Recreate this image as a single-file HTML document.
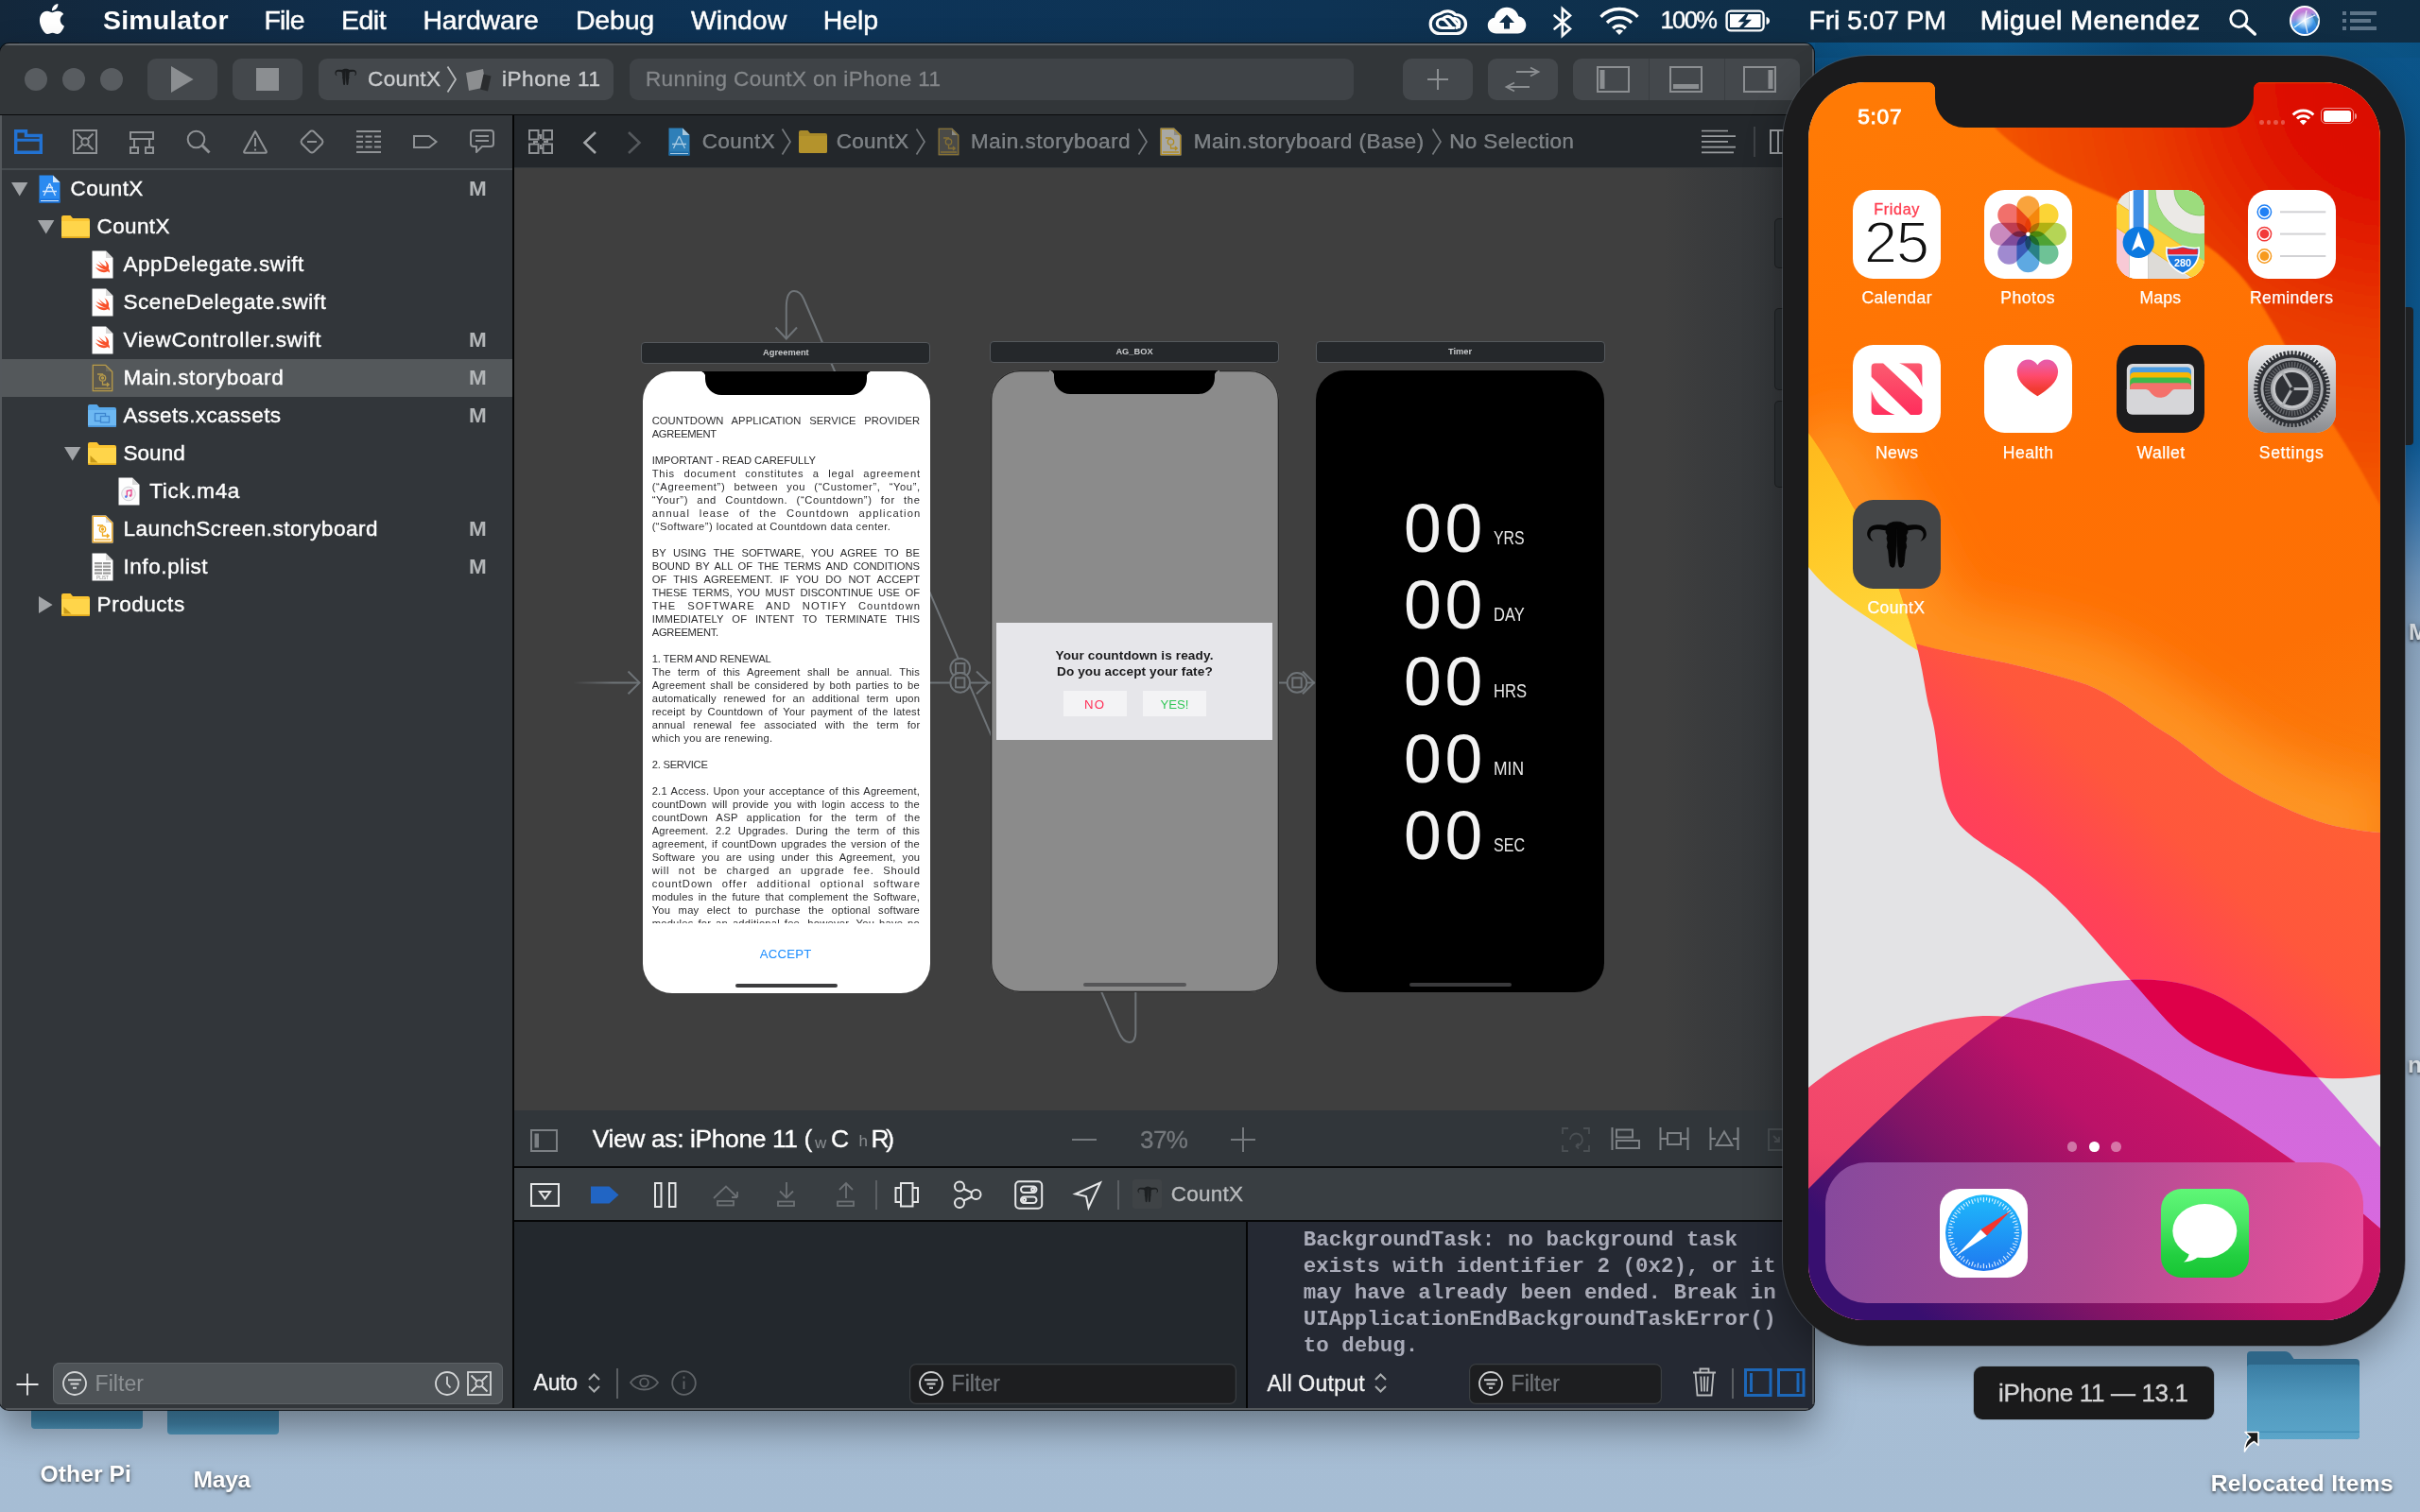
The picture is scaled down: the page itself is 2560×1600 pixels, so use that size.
<!DOCTYPE html>
<html><head><meta charset="utf-8"><title>Xcode</title>
<style>
*{box-sizing:border-box;margin:0;padding:0}
html,body{width:2560px;height:1600px;overflow:hidden}
body{position:relative;font-family:"Liberation Sans",sans-serif;background:#a9bfd5;color:#fff}
.a{position:absolute}
.t{position:absolute;white-space:nowrap;line-height:1}
svg{position:absolute;overflow:visible}
</style></head><body><div id="root" style="position:absolute;left:0;top:0;width:2560px;height:1600px;overflow:hidden;will-change:transform">
<!-- desktop -->
<div class="a" style="left:0;top:0;width:2560px;height:1600px;background:linear-gradient(180deg,#0b5387 0px,#0c588f 250px,#0f5e9b 470px,#3a7ab3 540px,#6f99c2 610px,#92adc9 680px,#a2b9d1 820px,#a8bed5 1300px,#a6bdd4 1600px)"></div>
<div class="a" style="left:1920px;top:45px;width:640px;height:16px;background:linear-gradient(90deg,#0b4f7f,#0e5a90 30%,#0a4b7a 55%,#0d5688 80%,#0a5283)"></div>
<div class="a" style="left:0;top:40px;width:20px;height:20px;background:#11273a"></div>
<div class="a" style="left:33px;top:1440px;width:118px;height:72.3px;border-radius:0 0 4px 4px;background:linear-gradient(180deg,#3f82a7,#3f84aa 85%,#4d93b8)"></div>
<div class="a" style="left:177px;top:1440px;width:118px;height:78.4px;border-radius:0 0 4px 4px;background:linear-gradient(180deg,#4284a9,#4386ac 85%,#4f95ba)"></div>
<div class="t" style="left:42.6px;top:1547.8px;font-size:24.6px;color:#fff;letter-spacing:0.07px;font-weight:bold;text-shadow:0 1.5px 3px rgba(0,0,0,.55),0 0 6px rgba(0,0,0,.25);">Other Pi</div>
<div class="t" style="left:204.6px;top:1553.6px;font-size:24.6px;color:#fff;letter-spacing:-0.28px;font-weight:bold;text-shadow:0 1.5px 3px rgba(0,0,0,.55),0 0 6px rgba(0,0,0,.25);">Maya</div>
<div class="t" style="left:2548.0px;top:656.6px;font-size:24.6px;color:#e8eef4;font-weight:bold;text-shadow:0 1.5px 3px rgba(0,0,0,.55),0 0 6px rgba(0,0,0,.25);">M</div>
<div class="t" style="left:2547.0px;top:1114.6px;font-size:24.6px;color:#e8eef4;font-weight:bold;text-shadow:0 1.5px 3px rgba(0,0,0,.55),0 0 6px rgba(0,0,0,.25);">nt</div>
<!-- menubar -->
<div class="a" id="mb" style="left:0;top:0;width:2560px;height:45px;background:linear-gradient(90deg,#13273b 0,#0f2e4c 400px,#0d3458 900px,#0e3354 1400px,#0f2e47 1900px,#102c42 2560px)"></div>
<svg style="left:39px;top:3.5px" width="32" height="32" viewBox="0 0 24 24"><path fill="#fff" d="M12.152 6.896c-.948 0-2.415-1.078-3.96-1.04-2.04.027-3.91 1.183-4.961 3.014-2.117 3.675-.546 9.103 1.519 12.09 1.013 1.454 2.208 3.09 3.792 3.039 1.52-.065 2.09-.987 3.935-.987 1.831 0 2.35.987 3.96.948 1.637-.026 2.676-1.48 3.676-2.948 1.156-1.688 1.636-3.325 1.662-3.415-.039-.013-3.182-1.221-3.22-4.857-.026-3.04 2.48-4.494 2.597-4.559-1.429-2.09-3.623-2.324-4.39-2.376-2-.156-3.675 1.09-4.61 1.09zM15.53 3.83c.843-1.012 1.4-2.427 1.245-3.83-1.207.052-2.662.805-3.532 1.818-.78.896-1.454 2.338-1.273 3.714 1.338.104 2.715-.688 3.559-1.701"/></svg>
<div class="t" style="left:109.0px;top:7.4px;font-size:28.5px;color:#fff;letter-spacing:0.13px;font-weight:bold;">Simulator</div>
<div class="t" style="left:279.6px;top:7.4px;font-size:28.5px;color:#fff;letter-spacing:-1.01px;-webkit-text-stroke:0.45px;">File</div>
<div class="t" style="left:361.0px;top:7.4px;font-size:28.5px;color:#fff;letter-spacing:-0.50px;-webkit-text-stroke:0.45px;">Edit</div>
<div class="t" style="left:447.4px;top:7.4px;font-size:28.5px;color:#fff;letter-spacing:-0.14px;-webkit-text-stroke:0.45px;">Hardware</div>
<div class="t" style="left:608.9px;top:7.4px;font-size:28.5px;color:#fff;letter-spacing:-0.17px;-webkit-text-stroke:0.45px;">Debug</div>
<div class="t" style="left:731.0px;top:7.4px;font-size:28.5px;color:#fff;letter-spacing:-0.03px;-webkit-text-stroke:0.45px;">Window</div>
<div class="t" style="left:870.7px;top:7.4px;font-size:28.5px;color:#fff;letter-spacing:-0.10px;-webkit-text-stroke:0.45px;">Help</div>
<div class="t" style="left:1756.5px;top:8.5px;font-size:25.5px;color:#fff;letter-spacing:-1.57px;-webkit-text-stroke:0.40px;">100%</div>
<div class="t" style="left:1913.5px;top:7.4px;font-size:28.5px;color:#fff;letter-spacing:-0.18px;-webkit-text-stroke:0.45px;">Fri 5:07 PM</div>
<div class="t" style="left:2094.8px;top:7.4px;font-size:28.5px;color:#fff;letter-spacing:0.52px;-webkit-text-stroke:0.80px;">Miguel Menendez</div>
<svg style="left:1511px;top:9px" width="42" height="29" viewBox="0 0 42 29"><g fill="none" stroke="#fff" stroke-width="3.2" stroke-linecap="round">
<path d="M13 5.2 C18 1.5 25 2.2 28.5 6.5 C34.5 6.5 39.5 10.5 39.5 16.5 C39.5 22.5 35 26.5 29.5 26.5 L12 26.5 C6.5 26.5 2.2 22.5 2.2 16.5 C2.2 10 7.5 6.2 13 5.2 Z"/>
<path d="M27 20.5 L14.5 20.5 C11.5 20.5 9.3 18.5 9.3 15.8 C9.3 13 11.6 11 14.3 11 C16 11 17 11.6 18.3 13 L24.5 20"/>
<path d="M15.2 11.2 C17 8.2 21.5 7.3 24.3 10 L32.5 19.5"/>
<path d="M26 11 C28 10 32.8 11.3 32.8 15.8 C32.8 18 31.6 19.6 30 20.3"/>
</g></svg>
<svg style="left:1573px;top:7px" width="42" height="29" viewBox="0 0 42 29"><path fill="#fff" d="M10 28.5 C4.5 28.5 0.8 24.8 0.8 20 C0.8 15.5 4 12.3 8 11.8 C9 5.5 14.5 0.8 21 0.8 C27 0.8 32 4.8 33.3 10.3 C38 11 41.3 14.8 41.3 19.5 C41.3 24.5 37.5 28.5 32.5 28.5 Z"/><path fill="#12304b" d="M21 8.5 L29 17 L24 17 L24 23.5 L18 23.5 L18 17 L13 17 Z"/></svg>
<svg style="left:1642px;top:7px" width="22" height="33" viewBox="0 0 22 33"><path fill="none" stroke="#fff" stroke-width="2.6" stroke-linejoin="miter" stroke-linecap="round" d="M2.5 9.5 L19 23.5 L10.8 30.8 L10.8 2.2 L19 9.5 L2.5 23.5"/></svg>
<svg style="left:1691px;top:6px" width="44" height="32" viewBox="0 0 44 32"><g fill="none" stroke="#fff" stroke-width="3.4" stroke-linecap="butt">
<path d="M2.5 11.8 C13 0.8 31 0.8 41.5 11.8"/><path d="M9 18 C16 10.8 28 10.8 35 18"/><path d="M15.2 24 C19 20.2 25 20.2 28.8 24"/></g><path fill="#fff" d="M22 31 L18 26.8 C20.2 24.8 23.8 24.8 26 26.8 Z"/></svg>
<svg style="left:1825px;top:10px" width="48" height="24" viewBox="0 0 48 24"><rect x="1.6" y="1.6" width="39" height="20.8" rx="4.5" fill="none" stroke="#fff" stroke-width="2.4"/><path fill="#fff" d="M43.5 8 C45.8 8.4 47 10 47 12 C47 14 45.8 15.6 43.5 16 Z"/>
<path fill="#fff" d="M5 5 L21.5 5 L13.5 13.2 L20 13.2 L15 19 L5 19 Z M24.5 5 L37.5 5 L37.5 19 L19.5 19 L28 10.8 L21.5 10.8 Z"/></svg>
<svg style="left:2357px;top:9px" width="31" height="29" viewBox="0 0 31 29"><circle cx="11.3" cy="11" r="8.6" fill="none" stroke="#fff" stroke-width="2.8"/><path d="M17.5 17.3 L28.3 27" stroke="#fff" stroke-width="3.4" stroke-linecap="round"/></svg>
<svg style="left:2421px;top:5px" width="34" height="34" viewBox="0 0 34 34"><defs><linearGradient id="sg" x1="0.3" y1="0" x2="0.6" y2="1"><stop offset="0" stop-color="#e06fd8"/><stop offset=".35" stop-color="#a78bd8"/><stop offset=".55" stop-color="#4aa5ee"/><stop offset="1" stop-color="#1f6fd0"/></linearGradient><radialGradient id="sg2" cx=".5" cy=".5" r=".35"><stop offset="0" stop-color="#fff"/><stop offset="1" stop-color="#fff" stop-opacity="0"/></radialGradient></defs><circle cx="17" cy="17" r="15" fill="url(#sg)" stroke="#fff" stroke-width="2"/><path d="M24 9 L32 15 L30 23 Z" fill="#2d6f9d" opacity=".7"/><circle cx="17" cy="17" r="14" fill="url(#sg2)"/><path d="M6 24 L17 16 L28 11 M17 16 L20 30 M17 16 L19 6" stroke="#fff" stroke-width="1.2" opacity=".85" fill="none"/></svg>
<div class="a" style="left:2478px;top:11.8px;width:4.3px;height:4.2px;background:#5d7488"></div>
<div class="a" style="left:2486px;top:11.8px;width:28px;height:4.2px;background:#5d7488"></div>
<div class="a" style="left:2478px;top:19.8px;width:4.3px;height:4.2px;background:#5d7488"></div>
<div class="a" style="left:2486px;top:19.8px;width:22px;height:4.2px;background:#5d7488"></div>
<div class="a" style="left:2478px;top:27.8px;width:4.3px;height:4.2px;background:#5d7488"></div>
<div class="a" style="left:2486px;top:27.8px;width:28px;height:4.2px;background:#5d7488"></div>
<!-- xcode window -->
<div class="a" id="xc" style="left:0;top:46px;width:1919px;height:1446px;border-radius:10px 10px 9px 9px;background:#32363a;overflow:hidden;box-shadow:0 0 0 1px rgba(10,12,14,.85),0 18px 40px rgba(0,0,0,.38)">
<div class="a" style="left:0;top:-46px;width:1919px;height:1600px">
<div class="a" style="left:0;top:46px;width:1919px;height:75px;background:#323639"></div>
<div class="a" style="left:0;top:46px;width:1919px;height:2px;background:#60656a"></div>
<div class="a" style="left:0;top:120.5px;width:1919px;height:2px;background:#0a0b0c"></div>
<div class="a" style="left:26px;top:72px;width:24px;height:24px;border-radius:12px;background:#585c60"></div>
<div class="a" style="left:66px;top:72px;width:24px;height:24px;border-radius:12px;background:#585c60"></div>
<div class="a" style="left:106px;top:72px;width:24px;height:24px;border-radius:12px;background:#585c60"></div>
<div class="a" style="left:156px;top:62px;width:74px;height:44px;background:#44484c;border-radius:9px;"></div>
<svg style="left:181px;top:70px" width="24" height="28"><path d="M0 0 L23.6 14 L0 28 Z" fill="#8b8e91"/></svg>
<div class="a" style="left:246px;top:62px;width:74px;height:44px;background:#44484c;border-radius:9px;"></div>
<div class="a" style="left:270.7px;top:72px;width:24.3px;height:24px;background:#8b8e91"></div>
<div class="a" style="left:337px;top:62px;width:312px;height:44px;background:#44484c;border-radius:9px;"></div>
<svg style="left:353.5px;top:72px" width="23.5" height="19" viewBox="14 22 65 51"><g fill="#1a1c1e"><path d="M37.5 27 C30 26 24 26 21.5 27 C17 28.5 14.7 33 15.3 37.5 C15.8 40.5 18.5 42.8 21.8 44 C19 41 18 38.5 18.6 35.5 C19.3 32.6 22 31.3 25 31.3 C29 31.3 33 32 37 32.8 Z"/><path d="M55.5 27 C63 26 69 26 71.5 27 C76 28.5 78.3 33 77.7 37.5 C77.2 40.5 74.5 42.8 71.2 44 C74 41 75 38.5 74.4 35.5 C73.7 32.6 71 31.3 68 31.3 C64 31.3 60 32 56 32.8 Z"/><path d="M46.5 23.2 L50.0 23.4 L54.0 24.8 L57.2 27.0 L57.6 31.0 L58.0 34.2 L56.3 37.5 L57.0 41.0 L55.9 45.0 L56.7 49.5 L55.3 54.0 L54.8 60.0 L54.2 66.0 L53.2 70.0 L51.2 71.3 L49.2 70.8 L48.2 66.0 L47.5 58.0 L47.0 48.0 L46.7 30.0 L46.3 30.0 L46.0 48.0 L45.5 58.0 L44.8 66.0 L43.8 70.8 L41.8 71.3 L39.8 70.0 L38.8 66.0 L38.2 60.0 L37.7 54.0 L36.3 49.5 L37.1 45.0 L36.0 41.0 L36.7 37.5 L35.0 34.2 L35.4 31.0 L35.8 27.0 L39.0 24.8 L43.0 23.4 L46.5 23.2 Z"/></g></svg>
<div class="t" style="left:389.0px;top:72.8px;font-size:22.5px;color:#c9cbcd;letter-spacing:0.39px;-webkit-text-stroke:0.40px;">CountX</div>
<svg style="left:472px;top:70px" width="12" height="28"><path d="M1.5 0.5 L10 14 L1.5 27.5" fill="none" stroke="#b5b8ba" stroke-width="1.8"/></svg>
<svg style="left:492px;top:72px" width="29" height="25" viewBox="0 0 29 25"><path d="M1 5 L19 1 L22 20 L4 24 Z" fill="#8c8e90"/><path d="M19.5 6.5 L27.5 8.5 L24 24.5 L16 22.5 Z" fill="#2a2c2e"/></svg>
<div class="t" style="left:531.0px;top:72.8px;font-size:22.5px;color:#c9cbcd;letter-spacing:0.54px;-webkit-text-stroke:0.40px;">iPhone 11</div>
<div class="a" style="left:666px;top:62px;width:766px;height:44px;background:#3f4347;border-radius:9px"></div>
<div class="t" style="left:683.0px;top:73.1px;font-size:22.5px;color:#84878a;letter-spacing:0.37px;-webkit-text-stroke:0.30px;">Running CountX on iPhone 11</div>
<div class="a" style="left:1484px;top:62px;width:74px;height:44px;background:#44484c;border-radius:9px;"></div>
<svg style="left:1509px;top:72px" width="24" height="24"><path d="M12 1 V23 M1 12 H23" stroke="#8b8e91" stroke-width="2" fill="none"/></svg>
<div class="a" style="left:1574px;top:62px;width:74px;height:44px;background:#44484c;border-radius:9px;"></div>
<svg style="left:1592px;top:71px" width="38" height="28"><path d="M12 5 H35 M27 0.5 L35.5 5 L27 9.5 M26 21 H2 M10 16.5 L1.5 21 L10 25.5" stroke="#8b8e91" stroke-width="1.8" fill="none"/></svg>
<div class="a" style="left:1664px;top:62px;width:240px;height:44px;background:#44484c;border-radius:9px;"></div>
<div class="a" style="left:1743.5px;top:62px;width:1px;height:44px;background:#3a3e42"></div><div class="a" style="left:1823.5px;top:62px;width:1px;height:44px;background:#3a3e42"></div>
<svg style="left:1688.5px;top:70px" width="35" height="28"><rect x="1" y="1" width="33" height="26" fill="none" stroke="#8b8e91" stroke-width="2"/><rect x="3.5" y="4" width="5" height="20" fill="#8b8e91"/></svg>
<svg style="left:1766.0px;top:70px" width="35" height="28"><rect x="1" y="1" width="33" height="26" fill="none" stroke="#8b8e91" stroke-width="2"/><rect x="4" y="19" width="27" height="5" fill="#8b8e91"/></svg>
<svg style="left:1844.0px;top:70px" width="35" height="28"><rect x="1" y="1" width="33" height="26" fill="none" stroke="#8b8e91" stroke-width="2"/><rect x="26.5" y="4" width="5" height="20" fill="#8b8e91"/></svg>
<div class="a" style="left:0;top:122px;width:542px;height:1370px;background:#32363a"></div>
<div class="a" style="left:0;top:178px;width:542px;height:1.5px;background:#464b4f"></div>
<div class="a" style="left:0;top:122px;width:1.5px;height:1370px;background:#4d5256"></div>
<div class="a" style="left:542px;top:122px;width:2px;height:1370px;background:#040505"></div>
<svg style="left:15px;top:137px" width="30" height="26" viewBox="0 0 30 26"><g fill="none" stroke="#2272d2" stroke-width="3.4"><path d="M1.7 3 V24.3 H28.3 V6.5 H12.5 V1.7 H1.7 Z"/><path d="M1.7 11.3 H28.3" stroke-width="3"/></g></svg>
<svg style="left:77px;top:137px" width="26" height="26" viewBox="0 0 26 26"><g fill="none" stroke="#8f9295" stroke-width="2"><rect x="1" y="1" width="24" height="24"/><circle cx="13" cy="13" r="3.7"/><path d="M4.5 4.5 L10 10 M21.5 4.5 L16 10 M4.5 21.5 L10 16 M21.5 21.5 L16 16"/></g></svg>
<svg style="left:137px;top:137px" width="26" height="26" viewBox="0 0 26 26"><g fill="none" stroke="#8f9295" stroke-width="2"><rect x="1" y="3" width="24" height="7"/><rect x="1" y="19" width="8" height="6"/><rect x="17" y="19" width="8" height="6"/><path d="M5 10 V19 M21 10 V19"/></g></svg>
<svg style="left:197px;top:137px" width="26" height="26" viewBox="0 0 26 26"><g fill="none" stroke="#8f9295" stroke-width="2"><circle cx="10.5" cy="10.5" r="8.8"/><path d="M17 17 L24.5 24.5" stroke-width="3"/></g></svg>
<svg style="left:257px;top:137px" width="26" height="26" viewBox="0 0 26 26"><g fill="none" stroke="#8f9295" stroke-width="2"><path d="M13 2 L24.8 23.3 Q25.2 24.6 23.8 24.8 L2.2 24.8 Q0.8 24.6 1.2 23.3 Z" stroke-linejoin="round"/><path d="M13 9 V18 M13 20.5 V22.5"/></g></svg>
<svg style="left:317px;top:137px" width="26" height="26" viewBox="0 0 26 26"><g fill="none" stroke="#8f9295" stroke-width="2"><path d="M13 1.5 Q14 1.2 15 2.2 L23.8 11 Q25.2 13 23.8 15 L15 23.8 Q13 25.2 11 23.8 L2.2 15 Q0.8 13 2.2 11 L11 2.2 Q12 1.2 13 1.5 Z"/><path d="M8 13 H18"/></g></svg>
<svg style="left:377px;top:137px" width="26" height="26" viewBox="0 0 26 26"><g fill="none" stroke="#8f9295" stroke-width="2"><path d="M0 2 H26 M0 24 H26" /><path d="M0 7.5 H7 M9.5 7.5 H16.5 M19 7.5 H26 M0 13 H7 M9.5 13 H16.5 M19 13 H26 M0 18.5 H7 M9.5 18.5 H16.5 M19 18.5 H26"/></g></svg>
<svg style="left:437px;top:137px" width="26" height="26" viewBox="0 0 26 26"><g fill="none" stroke="#8f9295" stroke-width="2"><path d="M1 7 H17 L24.5 13 L17 19 H1 Z"/></g></svg>
<svg style="left:497px;top:137px" width="26" height="26" viewBox="0 0 26 26"><g fill="none" stroke="#8f9295" stroke-width="2"><path d="M4 1 H22 Q25 1 25 4 V15 Q25 18 22 18 H13 L7 24 V18 H4 Q1 18 1 15 V4 Q1 1 4 1 Z" stroke-linejoin="round"/><path d="M6 7 H20 M6 12 H20"/></g></svg>
<div class="a" style="left:0;top:380px;width:542px;height:40px;background:#54585b"></div>
<svg style="left:12.0px;top:192.7px" width="18" height="15"><path d="M0 0 H17.4 L8.7 14.6 Z" fill="#a1a4a7"/></svg>
<svg style="left:41.0px;top:184.5px" width="23" height="30" viewBox="0 0 23 30"><path d="M0.5 0.5 H15 L22.5 8 V29.5 H0.5 Z" fill="#2b8af0"/><path d="M15 0.5 L22.5 8 H15 Z" fill="#cfe5fb"/><path d="M0.5 25.5 H22.5 V29.5 H0.5 Z" fill="#1973dd"/><path d="M2 27.5 H21" stroke="#d9ecff" stroke-width="1"/><g fill="none" stroke="#d4e8ff" stroke-width="1.3"><path d="M11.5 9 L5.5 22 M11.5 9 L17.5 22 M4 17.5 H19 M8 13.5 L15 13.5"/></g></svg>
<div class="t" style="left:74.6px;top:188.6px;font-size:22.5px;color:#fff;letter-spacing:0.33px;-webkit-text-stroke:0.40px;">CountX</div>
<div class="t" style="left:496.0px;top:188.6px;font-size:22.5px;color:#b3b6b8;font-weight:bold;">M</div>
<svg style="left:39.7px;top:232.7px" width="18" height="15"><path d="M0 0 H17.4 L8.7 14.6 Z" fill="#a1a4a7"/></svg>
<svg style="left:65.0px;top:228.0px" width="30" height="24" viewBox="0 0 30 24"><path d="M0 2 Q0 0 2 0 H9.5 L12 3 H28 Q30 3 30 5 V22 Q30 24 28 24 H2 Q0 24 0 22 Z" fill="#fbc532"/><path d="M0 6 H30 V22 Q30 24 28 24 H2 Q0 24 0 22 Z" fill="#ffd54a"/><path d="M0 22.3 H30 V22.5 Q30 24 28 24 H2 Q0 24 0 22.5 Z" fill="#e0a81c"/></svg>
<div class="t" style="left:102.6px;top:228.6px;font-size:22.5px;color:#fff;letter-spacing:0.35px;-webkit-text-stroke:0.40px;">CountX</div>
<svg style="left:96.6px;top:265.0px" width="23" height="30" viewBox="0 0 23 30"><path d="M0.5 0.5 H15 L22.5 8 V29.5 H0.5 Z" fill="#fefefe"/><path d="M15 0.5 L22.5 8 H15 Z" fill="#d8d8d8"/><path d="M4.5 14 C8 18 12 20.5 15.5 20.5 C12 20.5 7 20 4 17.5 C6.5 22 12 24.5 16 22.5 C17.5 21.8 18.5 23 19 23.8 C19.2 22 18.6 20.5 17.8 19.3 C19 16 17 12.5 13.5 10.5 C15.5 13 16 15.5 15.3 17.3 C12 15.5 8.5 12.5 7 10.5 C8.5 13 10 15 12 17 C9.5 16 6.5 15 4.5 14 Z" fill="#f8512a"/></svg>
<div class="t" style="left:130.4px;top:268.6px;font-size:22.5px;color:#fff;letter-spacing:0.60px;-webkit-text-stroke:0.40px;">AppDelegate.swift</div>
<svg style="left:96.6px;top:305.0px" width="23" height="30" viewBox="0 0 23 30"><path d="M0.5 0.5 H15 L22.5 8 V29.5 H0.5 Z" fill="#fefefe"/><path d="M15 0.5 L22.5 8 H15 Z" fill="#d8d8d8"/><path d="M4.5 14 C8 18 12 20.5 15.5 20.5 C12 20.5 7 20 4 17.5 C6.5 22 12 24.5 16 22.5 C17.5 21.8 18.5 23 19 23.8 C19.2 22 18.6 20.5 17.8 19.3 C19 16 17 12.5 13.5 10.5 C15.5 13 16 15.5 15.3 17.3 C12 15.5 8.5 12.5 7 10.5 C8.5 13 10 15 12 17 C9.5 16 6.5 15 4.5 14 Z" fill="#f8512a"/></svg>
<div class="t" style="left:130.4px;top:308.6px;font-size:22.5px;color:#fff;letter-spacing:0.51px;-webkit-text-stroke:0.40px;">SceneDelegate.swift</div>
<svg style="left:96.6px;top:345.0px" width="23" height="30" viewBox="0 0 23 30"><path d="M0.5 0.5 H15 L22.5 8 V29.5 H0.5 Z" fill="#fefefe"/><path d="M15 0.5 L22.5 8 H15 Z" fill="#d8d8d8"/><path d="M4.5 14 C8 18 12 20.5 15.5 20.5 C12 20.5 7 20 4 17.5 C6.5 22 12 24.5 16 22.5 C17.5 21.8 18.5 23 19 23.8 C19.2 22 18.6 20.5 17.8 19.3 C19 16 17 12.5 13.5 10.5 C15.5 13 16 15.5 15.3 17.3 C12 15.5 8.5 12.5 7 10.5 C8.5 13 10 15 12 17 C9.5 16 6.5 15 4.5 14 Z" fill="#f8512a"/></svg>
<div class="t" style="left:130.4px;top:348.6px;font-size:22.5px;color:#fff;letter-spacing:0.69px;-webkit-text-stroke:0.40px;">ViewController.swift</div>
<div class="t" style="left:496.0px;top:348.6px;font-size:22.5px;color:#b3b6b8;font-weight:bold;">M</div>
<svg style="left:96.6px;top:385.0px" width="23" height="30" viewBox="0 0 23 30"><path d="M0.5 0.5 H15 L22.5 8 V29.5 H0.5 Z" fill="#5a5850"/><path d="M15 0.5 L22.5 8 H15 Z" fill="#6b695f"/><g fill="none" stroke="#b79a4a" stroke-width="1.3"><path d="M1.3 1.3 H14.5 L21.7 8.5 V28.7 H1.3 Z"/><path d="M3 26 H20"/><circle cx="11.5" cy="15" r="3.2"/><circle cx="11.5" cy="15" r="1" fill="#b79a4a"/><path d="M6 11 H11.5 V12 M11.5 18.5 V22 H18 M16 20 L18.2 22 L16 24"/></g></svg>
<div class="t" style="left:130.4px;top:388.6px;font-size:22.5px;color:#fff;letter-spacing:0.57px;-webkit-text-stroke:0.40px;">Main.storyboard</div>
<div class="t" style="left:496.0px;top:388.6px;font-size:22.5px;color:#b3b6b8;font-weight:bold;">M</div>
<svg style="left:93.0px;top:428.0px" width="30" height="24" viewBox="0 0 30 24"><path d="M0 2 Q0 0 2 0 H9.5 L12 3 H28 Q30 3 30 5 V22 Q30 24 28 24 H2 Q0 24 0 22 Z" fill="#58a8ea"/><path d="M0 6 H30 V22 Q30 24 28 24 H2 Q0 24 0 22 Z" fill="#6db8f2"/><path d="M0 22.3 H30 V22.5 Q30 24 28 24 H2 Q0 24 0 22.5 Z" fill="#4a95d8"/><g fill="none" stroke="#3d86cf" stroke-width="1.3"><rect x="7.5" y="9.5" width="11" height="8"/><rect x="13.5" y="12.5" width="9" height="6.5" fill="#6db8f2"/></g></svg>
<div class="t" style="left:130.4px;top:428.6px;font-size:22.5px;color:#fff;letter-spacing:0.38px;-webkit-text-stroke:0.40px;">Assets.xcassets</div>
<div class="t" style="left:496.0px;top:428.6px;font-size:22.5px;color:#b3b6b8;font-weight:bold;">M</div>
<svg style="left:67.5px;top:472.7px" width="18" height="15"><path d="M0 0 H17.4 L8.7 14.6 Z" fill="#a1a4a7"/></svg>
<svg style="left:93.0px;top:468.0px" width="30" height="24" viewBox="0 0 30 24"><path d="M0 2 Q0 0 2 0 H9.5 L12 3 H28 Q30 3 30 5 V22 Q30 24 28 24 H2 Q0 24 0 22 Z" fill="#fbc532"/><path d="M0 6 H30 V22 Q30 24 28 24 H2 Q0 24 0 22 Z" fill="#ffd54a"/><path d="M0 22.3 H30 V22.5 Q30 24 28 24 H2 Q0 24 0 22.5 Z" fill="#e0a81c"/><path d="M2.5 14 L10.5 21.5 H2.5 Z" fill="#c89a18"/></svg>
<div class="t" style="left:130.4px;top:468.6px;font-size:22.5px;color:#fff;letter-spacing:0.08px;-webkit-text-stroke:0.40px;">Sound</div>
<svg style="left:124.9px;top:505.0px" width="23" height="30" viewBox="0 0 23 30"><path d="M0.5 0.5 H15 L22.5 8 V29.5 H0.5 Z" fill="#fefefe"/><path d="M15 0.5 L22.5 8 H15 Z" fill="#d8d8d8"/><circle cx="11" cy="17.5" r="7.3" fill="#f4f4f6" stroke="#d2d2d6" stroke-width="1"/><path d="M9.3 20.5 V14.5 L14 13.5 V19.3" fill="none" stroke="#e8468c" stroke-width="1.3"/><circle cx="8.3" cy="20.6" r="1.3" fill="#4a7df0"/><circle cx="13" cy="19.5" r="1.3" fill="#e8468c"/></svg>
<div class="t" style="left:158.2px;top:508.6px;font-size:22.5px;color:#fff;letter-spacing:0.68px;-webkit-text-stroke:0.40px;">Tick.m4a</div>
<svg style="left:96.6px;top:545.0px" width="23" height="30" viewBox="0 0 23 30"><path d="M0.5 0.5 H15 L22.5 8 V29.5 H0.5 Z" fill="#fefefe"/><path d="M15 0.5 L22.5 8 H15 Z" fill="#d8d8d8"/><g fill="none" stroke="#f0a81e" stroke-width="1.3"><path d="M1.3 1.3 H14.5 L21.7 8.5 V28.7 H1.3 Z"/><path d="M3 26 H20"/><circle cx="11.5" cy="15" r="3.2"/><circle cx="11.5" cy="15" r="1" fill="#f0a81e"/><path d="M6 11 H11.5 V12 M11.5 18.5 V22 H18 M16 20 L18.2 22 L16 24"/></g></svg>
<div class="t" style="left:130.4px;top:548.6px;font-size:22.5px;color:#fff;letter-spacing:0.52px;-webkit-text-stroke:0.40px;">LaunchScreen.storyboard</div>
<div class="t" style="left:496.0px;top:548.6px;font-size:22.5px;color:#b3b6b8;font-weight:bold;">M</div>
<svg style="left:96.6px;top:585.0px" width="23" height="30" viewBox="0 0 23 30"><path d="M0.5 0.5 H15 L22.5 8 V29.5 H0.5 Z" fill="#fefefe"/><path d="M15 0.5 L22.5 8 H15 Z" fill="#d8d8d8"/><g fill="#9a9a9a"><rect x="3" y="10" width="8" height="2.2"/><rect x="12" y="10" width="8" height="2.2"/><rect x="3" y="13.5" width="8" height="2.2"/><rect x="12" y="13.5" width="8" height="2.2"/><rect x="3" y="17" width="8" height="2.2"/><rect x="12" y="17" width="8" height="2.2"/><rect x="3" y="20.5" width="8" height="2.2"/><rect x="12" y="20.5" width="8" height="2.2"/></g><text x="11.5" y="28.3" font-size="4.6" text-anchor="middle" fill="#888" font-family="Liberation Sans">PLIST</text></svg>
<div class="t" style="left:130.4px;top:588.6px;font-size:22.5px;color:#fff;letter-spacing:0.60px;-webkit-text-stroke:0.40px;">Info.plist</div>
<div class="t" style="left:496.0px;top:588.6px;font-size:22.5px;color:#b3b6b8;font-weight:bold;">M</div>
<svg style="left:41.0px;top:631.0px" width="15" height="18"><path d="M0 0 V18 L14.6 9 Z" fill="#a1a4a7"/></svg>
<svg style="left:65.0px;top:628.0px" width="30" height="24" viewBox="0 0 30 24"><path d="M0 2 Q0 0 2 0 H9.5 L12 3 H28 Q30 3 30 5 V22 Q30 24 28 24 H2 Q0 24 0 22 Z" fill="#fbc532"/><path d="M0 6 H30 V22 Q30 24 28 24 H2 Q0 24 0 22 Z" fill="#ffd54a"/><path d="M0 22.3 H30 V22.5 Q30 24 28 24 H2 Q0 24 0 22.5 Z" fill="#e0a81c"/><path d="M2.5 14 L10.5 21.5 H2.5 Z" fill="#c89a18"/></svg>
<div class="t" style="left:102.6px;top:628.6px;font-size:22.5px;color:#fff;letter-spacing:0.54px;-webkit-text-stroke:0.40px;">Products</div>
<svg style="left:17px;top:1453px" width="24" height="24"><path d="M12 0.5 V23.5 M0.5 12 H23.5" stroke="#e8e9ea" stroke-width="1.8" fill="none"/></svg>
<div class="a" style="left:56px;top:1442px;width:476px;height:44px;background:#4e5357;border-radius:7px;box-shadow:inset 0 0 0 1px #5d6266"></div>
<svg style="left:66px;top:1451px" width="26" height="26"><circle cx="13" cy="13" r="12" fill="none" stroke="#d4d6d7" stroke-width="1.8"/><path d="M6 9.3 H20 M8.5 13.5 H17.5 M11 17.7 H15" stroke="#d4d6d7" stroke-width="2" fill="none"/></svg>
<div class="t" style="left:100.5px;top:1452.9px;font-size:23.0px;color:#8d9194;letter-spacing:0.08px;">Filter</div>
<svg style="left:460px;top:1451px" width="26" height="26"><circle cx="13" cy="13" r="12" fill="none" stroke="#d4d6d7" stroke-width="1.8"/><path d="M13 5.5 V13.5 L16.5 17.5" fill="none" stroke="#d4d6d7" stroke-width="1.8"/></svg>
<svg style="left:494px;top:1451px" width="26" height="26"><g fill="none" stroke="#d4d6d7" stroke-width="1.8"><rect x="1" y="1" width="24" height="24"/><circle cx="13" cy="13" r="3.7"/><path d="M4.5 4.5 L10 10 M21.5 4.5 L16 10 M4.5 21.5 L10 16 M21.5 21.5 L16 16"/></g></svg>
<div class="a" style="left:544px;top:122px;width:1376px;height:56px;background:#23272b"></div>
<div class="a" style="left:544px;top:177px;width:1376px;height:1px;background:#34383b"></div>
<svg style="left:559px;top:137px" width="26" height="26"><g fill="none" stroke="#8f9295" stroke-width="2"><rect x="1" y="1" width="9.5" height="9.5"/><rect x="15.5" y="1" width="9.5" height="9.5"/><rect x="1" y="15.5" width="9.5" height="9.5"/><rect x="15.5" y="15.5" width="9.5" height="9.5"/><path d="M10.5 6 H13 V10 M20 10.5 V13 H16 M6 15.5 V13 H10 M15.5 20 H13 V16"/></g></svg>
<svg style="left:616px;top:139px" width="16" height="24"><path d="M14 1 L2.5 12 L14 23" fill="none" stroke="#a4a7aa" stroke-width="2.6"/></svg>
<svg style="left:663px;top:139px" width="16" height="24"><path d="M2 1 L13.5 12 L2 23" fill="none" stroke="#55595d" stroke-width="2.6"/></svg>
<svg style="left:707px;top:135px" width="23" height="30" viewBox="0 0 23 30"><path d="M0.5 0.5 H15 L22.5 8 V29.5 H0.5 Z" fill="#2e7fb8"/><path d="M15 0.5 L22.5 8 H15 Z" fill="#a8c7dc"/><path d="M0.5 25.5 H22.5 V29.5 H0.5 Z" fill="#1d6ca8"/><path d="M2 27.5 H21" stroke="#a9cbe3" stroke-width="1"/><g fill="none" stroke="#a9cbe3" stroke-width="1.3"><path d="M11.5 9 L5.5 22 M11.5 9 L17.5 22 M4 17.5 H19"/></g></svg>
<div class="t" style="left:742.5px;top:138.9px;font-size:22.5px;color:#7c8084;letter-spacing:0.39px;text-shadow:0.4px 0 0 #7c8084;">CountX</div>
<svg style="left:826.0px;top:136px" width="12" height="28"><path d="M1.5 0.5 L10 14 L1.5 27.5" fill="none" stroke="#74787c" stroke-width="1.7"/></svg>
<svg style="left:845px;top:138px" width="30" height="24" viewBox="0 0 30 24"><path d="M0 2 Q0 0 2 0 H9.5 L12 3 H28 Q30 3 30 5 V22 Q30 24 28 24 H2 Q0 24 0 22 Z" fill="#a98a2a"/><path d="M0 6 H30 V22 Q30 24 28 24 H2 Q0 24 0 22 Z" fill="#b4932c"/></svg>
<div class="t" style="left:884.5px;top:138.9px;font-size:22.5px;color:#7c8084;letter-spacing:0.29px;text-shadow:0.4px 0 0 #7c8084;">CountX</div>
<svg style="left:968.0px;top:136px" width="12" height="28"><path d="M1.5 0.5 L10 14 L1.5 27.5" fill="none" stroke="#74787c" stroke-width="1.7"/></svg>
<svg style="left:991.5px;top:135px" width="23" height="30" viewBox="0 0 23 30"><path d="M0.5 0.5 H15 L22.5 8 V29.5 H0.5 Z" fill="#4a4a47"/><path d="M15 0.5 L22.5 8 H15 Z" fill="#8a8a86"/><g fill="none" stroke="#857034" stroke-width="1.3"><path d="M1.3 1.3 H14.5 L21.7 8.5 V28.7 H1.3 Z"/><path d="M3 26 H20"/><circle cx="11.5" cy="15" r="3.2"/><path d="M6 11 H11.5 V12 M11.5 18.5 V22 H18 M16 20 L18.2 22 L16 24"/></g></svg>
<div class="t" style="left:1026.7px;top:138.9px;font-size:22.5px;color:#7c8084;letter-spacing:0.53px;text-shadow:0.4px 0 0 #7c8084;">Main.storyboard</div>
<svg style="left:1203.0px;top:136px" width="12" height="28"><path d="M1.5 0.5 L10 14 L1.5 27.5" fill="none" stroke="#74787c" stroke-width="1.7"/></svg>
<svg style="left:1227.0px;top:135px" width="23" height="30" viewBox="0 0 23 30"><path d="M0.5 0.5 H15 L22.5 8 V29.5 H0.5 Z" fill="#a8a8a4"/><path d="M15 0.5 L22.5 8 H15 Z" fill="#8a8a86"/><g fill="none" stroke="#b08c24" stroke-width="1.3"><path d="M1.3 1.3 H14.5 L21.7 8.5 V28.7 H1.3 Z"/><path d="M3 26 H20"/><circle cx="11.5" cy="15" r="3.2"/><path d="M6 11 H11.5 V12 M11.5 18.5 V22 H18 M16 20 L18.2 22 L16 24"/></g></svg>
<div class="t" style="left:1262.6px;top:138.9px;font-size:22.5px;color:#7c8084;letter-spacing:0.45px;text-shadow:0.4px 0 0 #7c8084;">Main.storyboard (Base)</div>
<svg style="left:1513.5px;top:136px" width="12" height="28"><path d="M1.5 0.5 L10 14 L1.5 27.5" fill="none" stroke="#74787c" stroke-width="1.7"/></svg>
<div class="t" style="left:1533.0px;top:138.9px;font-size:22.5px;color:#7c8084;letter-spacing:0.37px;text-shadow:0.4px 0 0 #7c8084;">No Selection</div>
<svg style="left:1800px;top:137px" width="36" height="26"><path d="M0 1.5 H28 M0 7.2 H36 M0 12.9 H28 M0 18.6 H36 M0 24.3 H34" stroke="#9a9da0" stroke-width="1.7"/></svg>
<div class="a" style="left:1855px;top:134px;width:1.5px;height:32px;background:#3e4246"></div>
<svg style="left:1872px;top:137px" width="26" height="26"><rect x="1" y="1" width="24" height="24" fill="none" stroke="#9a9da0" stroke-width="2"/><path d="M9 1 V25" stroke="#9a9da0" stroke-width="2"/></svg>
<div class="a" style="left:544px;top:178px;width:1376px;height:997px;background:#3f3f3f"></div>
<div class="a" style="left:1760px;top:178px;width:130px;height:997px;background:linear-gradient(90deg,rgba(44,49,54,0),rgba(44,49,54,.35) 45%,rgba(44,49,54,.62))"></div>
<svg style="left:0;top:0" width="1920" height="1200"><g fill="none" stroke="#6f7478" stroke-width="2">
<path d="M831.8 358 V326 Q831.8 308 840 308 Q846.5 308 850 316 L1183 1091 Q1188 1103 1194.5 1103 Q1201.3 1103 1201.3 1092 V1050"/>
<path d="M820.5 346.5 L831.8 358.5 L843 346.5"/>
</g>
<defs><linearGradient id="eg" gradientUnits="userSpaceOnUse" x1="606" y1="0" x2="676" y2="0"><stop offset="0" stop-color="#6f7478" stop-opacity="0"/><stop offset=".6" stop-color="#6f7478"/></linearGradient></defs>
<path d="M606 722.4 H676" stroke="url(#eg)" stroke-width="2" fill="none"/><path d="M664.5 710.5 L676.5 722.4 L664.5 734.3" stroke="#6f7478" stroke-width="2" fill="none"/>
<g fill="none" stroke="#6f7478" stroke-width="2"><path d="M984 722.4 H1051"/><path d="M1033 710.5 L1045.5 722.4 L1033 734.3"/>
<circle cx="1015.7" cy="707" r="10.3" fill="#3f3f3f"/><rect x="1011" y="702" width="9.4" height="10"/><circle cx="1015.7" cy="722.4" r="10.3" fill="#3f3f3f"/><rect x="1011" y="717.4" width="9.4" height="10"/>
<path d="M1353 722.4 H1391"/><path d="M1378 710.5 L1390 722.4 L1378 734.3"/><circle cx="1372" cy="722.4" r="10.3" fill="#3f3f3f"/><rect x="1367.3" y="717.4" width="9.4" height="10"/></g></svg>
<div class="a" style="left:678.4px;top:361.5px;width:306.0px;height:23px;background:#25282b;border:1.5px solid #55595d;border-radius:4px"></div>
<div class="t" style="left:807.1px;top:368.6px;font-size:9.3px;color:#c8cacc;font-weight:bold;">Agreement</div>
<div class="a" style="left:1047.0px;top:360.5px;width:306.0px;height:23px;background:#25282b;border:1.5px solid #55595d;border-radius:4px"></div>
<div class="t" style="left:1180.4px;top:367.6px;font-size:9.3px;color:#c8cacc;font-weight:bold;">AG_BOX</div>
<div class="a" style="left:1391.5px;top:360.5px;width:306.2px;height:23px;background:#25282b;border:1.5px solid #55595d;border-radius:4px"></div>
<div class="t" style="left:1532.0px;top:367.6px;font-size:9.3px;color:#c8cacc;font-weight:bold;">Timer</div>
<div class="a" style="left:680px;top:393px;width:304px;height:657.5px;background:#fff;border-radius:31px;overflow:hidden">
<div class="a" style="left:66px;top:-10px;width:171px;height:34.5px;background:#000;border-radius:0 0 17px 17px"></div>
<div class="a" style="left:61px;top:0;width:5px;height:5px;background:radial-gradient(circle at 0 100%,#fff 4.6px,#000 5.2px)"></div>
<div class="a" style="left:237px;top:0;width:5px;height:5px;background:radial-gradient(circle at 100% 100%,#fff 4.6px,#000 5.2px)"></div>
<div class="a" style="left:9.7px;top:45px;width:284px;height:538.7px;overflow:hidden;font-size:11.2px;line-height:14px;color:#2b2b2d;white-space:nowrap">
<div style="height:14px;word-spacing:5.50px;letter-spacing:0.07px">COUNTDOWN APPLICATION SERVICE PROVIDER</div>
<div style="height:14px;letter-spacing:-0.31px">AGREEMENT</div>
<div style="height:14px"></div>
<div style="height:14px;letter-spacing:-0.02px">IMPORTANT - READ CAREFULLY</div>
<div style="height:14px;word-spacing:5.50px;letter-spacing:0.79px">This document constitutes a legal agreement</div>
<div style="height:14px;word-spacing:5.50px;letter-spacing:0.61px">(“Agreement”) between you (“Customer”, “You”,</div>
<div style="height:14px;word-spacing:5.50px;letter-spacing:0.65px">“Your”) and Countdown. (“Countdown”) for the</div>
<div style="height:14px;word-spacing:5.50px;letter-spacing:1.13px">annual lease of the Countdown application</div>
<div style="height:14px;letter-spacing:0.45px">(“Software”) located at Countdown data center.</div>
<div style="height:14px"></div>
<div style="height:14px;word-spacing:4.36px;letter-spacing:0.00px">BY USING THE SOFTWARE, YOU AGREE TO BE</div>
<div style="height:14px;word-spacing:2.52px;letter-spacing:0.00px">BOUND BY ALL OF THE TERMS AND CONDITIONS</div>
<div style="height:14px;word-spacing:4.24px;letter-spacing:0.00px">OF THIS AGREEMENT. IF YOU DO NOT ACCEPT</div>
<div style="height:14px;word-spacing:2.36px;letter-spacing:0.00px">THESE TERMS, YOU MUST DISCONTINUE USE OF</div>
<div style="height:14px;word-spacing:7.80px;letter-spacing:1.06px">THE SOFTWARE AND NOTIFY Countdown</div>
<div style="height:14px;word-spacing:5.50px;letter-spacing:0.17px">IMMEDIATELY OF INTENT TO TERMINATE THIS</div>
<div style="height:14px;letter-spacing:-0.25px">AGREEMENT.</div>
<div style="height:14px"></div>
<div style="height:14px;letter-spacing:-0.11px">1. TERM AND RENEWAL</div>
<div style="height:14px;word-spacing:4.17px;letter-spacing:0.20px">The term of this Agreement shall be annual. This</div>
<div style="height:14px;word-spacing:1.73px;letter-spacing:0.21px">Agreement shall be considered by both parties to be</div>
<div style="height:14px;word-spacing:4.21px;letter-spacing:0.22px">automatically renewed for an additional term upon</div>
<div style="height:14px;word-spacing:2.49px;letter-spacing:0.21px">receipt by Countdown of Your payment of the latest</div>
<div style="height:14px;word-spacing:5.50px;letter-spacing:0.23px">annual renewal fee associated with the term for</div>
<div style="height:14px;letter-spacing:0.31px">which you are renewing.</div>
<div style="height:14px"></div>
<div style="height:14px;letter-spacing:-0.24px">2. SERVICE</div>
<div style="height:14px"></div>
<div style="height:14px;word-spacing:1.09px;letter-spacing:0.20px">2.1 Access. Upon your acceptance of this Agreement,</div>
<div style="height:14px;word-spacing:2.28px;letter-spacing:0.21px">countDown will provide you with login access to the</div>
<div style="height:14px;word-spacing:5.50px;letter-spacing:0.37px">countDown ASP application for the term of the</div>
<div style="height:14px;word-spacing:4.21px;letter-spacing:0.20px">Agreement. 2.2 Upgrades. During the term of this</div>
<div style="height:14px;word-spacing:1.36px;letter-spacing:0.21px">agreement, if countDown upgrades the version of the</div>
<div style="height:14px;word-spacing:3.62px;letter-spacing:0.21px">Software you are using under this Agreement, you</div>
<div style="height:14px;word-spacing:5.50px;letter-spacing:0.78px">will not be charged an upgrade fee. Should</div>
<div style="height:14px;word-spacing:5.50px;letter-spacing:0.96px">countDown offer additional optional software</div>
<div style="height:14px;word-spacing:1.89px;letter-spacing:0.21px">modules in the future that complement the Software,</div>
<div style="height:14px;word-spacing:5.10px;letter-spacing:0.21px">You may elect to purchase the optional software</div>
<div style="height:14px;word-spacing:1.65px;letter-spacing:0.21px">modules for an additional fee, however, You have no</div>
</div>
<div class="t" style="left:123.8px;top:610.3px;font-size:13.2px;color:#1a8cff;letter-spacing:0.19px;">ACCEPT</div>
<div class="a" style="left:97.5px;top:648px;width:108.5px;height:4px;border-radius:2px;background:#3c3c3e"></div>
</div>
<div class="a" style="left:1048px;top:392px;width:305px;height:658px;background:#8b8b8b;border-radius:31px;overflow:hidden;box-shadow:inset 0 0 0 1.3px #2a2a2a">
<div class="a" style="left:67px;top:-10px;width:170px;height:35px;background:#000;border-radius:0 0 17px 17px"></div>
<div class="a" style="left:62px;top:0;width:5px;height:5px;background:radial-gradient(circle at 0 100%,#8b8b8b 4.6px,#000 5.2px)"></div>
<div class="a" style="left:237px;top:0;width:5px;height:5px;background:radial-gradient(circle at 100% 100%,#8b8b8b 4.6px,#000 5.2px)"></div>
<div class="a" style="left:6px;top:267px;width:292px;height:123.5px;background:#e6e6ea"></div>
<div class="t" style="left:68.5px;top:295.1px;font-size:13.6px;color:#1a1a1c;letter-spacing:0.12px;font-weight:bold;">Your countdown is ready.</div>
<div class="t" style="left:70.0px;top:312.1px;font-size:13.6px;color:#1a1a1c;letter-spacing:0.10px;font-weight:bold;">Do you accept your fate?</div>
<div class="a" style="left:76.6px;top:339.4px;width:67px;height:27px;background:#f3f3f5"></div>
<div class="a" style="left:161.4px;top:339.4px;width:66.6px;height:27px;background:#f3f3f5"></div>
<div class="t" style="left:99.1px;top:346.6px;font-size:13.2px;color:#ff2d55;letter-spacing:1.20px;">NO</div>
<div class="t" style="left:179.5px;top:346.6px;font-size:13.2px;color:#34c759;letter-spacing:-0.03px;">YES!</div>
<div class="a" style="left:98px;top:648px;width:109px;height:4px;border-radius:2px;background:#565658"></div>
</div>
<div class="a" style="left:1392px;top:392px;width:305px;height:658px;background:#000;border-radius:31px;overflow:hidden">
<div class="t" style="left:93.1px;top:131.6px;font-size:71.5px;color:#f3f3f3;letter-spacing:3.67px;">00</div>
<div class="t" style="left:188.2px;top:167.5px;font-size:19.5px;color:#e8e8e8;transform:scaleX(0.8156);transform-origin:0 50%;">YRS</div>
<div class="t" style="left:93.1px;top:213.0px;font-size:71.5px;color:#f3f3f3;letter-spacing:3.67px;">00</div>
<div class="t" style="left:188.2px;top:248.9px;font-size:19.5px;color:#e8e8e8;transform:scaleX(0.8461);transform-origin:0 50%;">DAY</div>
<div class="t" style="left:93.1px;top:294.4px;font-size:71.5px;color:#f3f3f3;letter-spacing:3.67px;">00</div>
<div class="t" style="left:188.2px;top:330.3px;font-size:19.5px;color:#e8e8e8;transform:scaleX(0.8501);transform-origin:0 50%;">HRS</div>
<div class="t" style="left:93.1px;top:375.8px;font-size:71.5px;color:#f3f3f3;letter-spacing:3.67px;">00</div>
<div class="t" style="left:188.2px;top:411.7px;font-size:19.5px;color:#e8e8e8;transform:scaleX(0.8953);transform-origin:0 50%;">MIN</div>
<div class="t" style="left:93.1px;top:457.2px;font-size:71.5px;color:#f3f3f3;letter-spacing:3.67px;">00</div>
<div class="t" style="left:188.2px;top:493.1px;font-size:19.5px;color:#e8e8e8;transform:scaleX(0.8230);transform-origin:0 50%;">SEC</div>
<div class="a" style="left:99px;top:648px;width:108px;height:4px;border-radius:2px;background:#3a3a3c"></div>
</div>
<div class="a" style="left:544px;top:1175px;width:1376px;height:59px;background:#31363a"></div>
<div class="a" style="left:544px;top:1233.5px;width:1376px;height:2.5px;background:#060708"></div>
<svg style="left:561px;top:1195px" width="29" height="24"><rect x="1" y="1" width="27" height="22" fill="none" stroke="#7c8084" stroke-width="2"/><rect x="4.5" y="4.5" width="4.5" height="15" fill="#7c8084"/></svg>
<div class="t" style="left:626.8px;top:1192.3px;font-size:26.5px;color:#fff;letter-spacing:-0.42px;-webkit-text-stroke:0.35px;">View as: iPhone 11 (</div>
<div class="t" style="left:862.0px;top:1200.6px;font-size:17.0px;color:#8b8f92;">w</div>
<div class="t" style="left:879.0px;top:1192.3px;font-size:26.5px;color:#fff;-webkit-text-stroke:0.35px;">C</div>
<div class="t" style="left:908.5px;top:1198.6px;font-size:17.0px;color:#8b8f92;">h</div>
<div class="t" style="left:921.5px;top:1192.3px;font-size:26.5px;color:#fff;letter-spacing:-3.46px;-webkit-text-stroke:0.35px;">R)</div>
<div class="a" style="left:1133.7px;top:1204.5px;width:26px;height:2px;background:#75797d"></div>
<div class="t" style="left:1205.9px;top:1192.6px;font-size:26.0px;color:#75797d;letter-spacing:-0.47px;-webkit-text-stroke:0.30px;">37%</div>
<svg style="left:1302px;top:1192.5px" width="26" height="26"><path d="M13 0 V26 M0 13 H26" stroke="#75797d" stroke-width="2" fill="none"/></svg>
<svg style="left:1652px;top:1193px" width="30" height="26"><g fill="none" stroke="#4a4f53" stroke-width="1.8"><path d="M1 7 V1 H7 M23 1 H29 V7 M29 19 V25 H23 M7 25 H1 V19"/><path d="M9 13 A6.5 6.5 0 1 1 15 19.5 M15 19.5 L18 17 M15 19.5 L18 22.5"/></g></svg>
<svg style="left:1704px;top:1193px" width="31" height="24"><g fill="none" stroke="#7d8185" stroke-width="2"><path d="M1.5 0 V24"/><rect x="6" y="2.5" width="17" height="8"/><rect x="6" y="14" width="24" height="8"/></g></svg>
<svg style="left:1755px;top:1193px" width="32" height="24"><g fill="none" stroke="#7d8185" stroke-width="2"><path d="M1.5 0 V24 M30.5 0 V24 M1.5 12 H9 M23 12 H30.5"/><rect x="9" y="6" width="14" height="12"/></g></svg>
<svg style="left:1808px;top:1193px" width="32" height="24"><g fill="none" stroke="#7d8185" stroke-width="2"><path d="M1.5 0 V24 M30.5 0 V24 M1.5 12 H7 M25 12 H30.5"/><path d="M16 4.5 L24.5 19 H7.5 Z"/></g></svg>
<svg style="left:1870px;top:1194px" width="24" height="24"><g fill="none" stroke="#4a4f53" stroke-width="1.8"><rect x="1" y="1" width="22" height="22"/><path d="M6 8 L12 14 M12 9 V14 H7"/></g></svg>
<div class="a" style="left:544px;top:1236px;width:1376px;height:56px;background:#393e42"></div>
<div class="a" style="left:544px;top:1291px;width:1376px;height:2.5px;background:#060708"></div>
<svg style="left:560.5px;top:1251.5px" width="31" height="25"><rect x="1" y="1" width="29" height="23" fill="none" stroke="#e6e7e8" stroke-width="2"/><path d="M10 9 H21 L15.5 16.5 Z" fill="none" stroke="#e6e7e8" stroke-width="2"/></svg>
<svg style="left:625px;top:1254.5px" width="30" height="19"><path d="M0 0.5 H19.5 L29.5 9.5 L19.5 18.5 H0 Z" fill="#2165c4"/></svg>
<svg style="left:692px;top:1251px" width="24" height="27"><g fill="none" stroke="#e6e7e8" stroke-width="2"><rect x="1" y="1" width="6.5" height="25"/><rect x="16" y="1" width="6.5" height="25"/></g></svg>
<svg style="left:754px;top:1254px" width="28" height="23"><g fill="none" stroke="#6c7074" stroke-width="1.8"><path d="M1 14 L14 1.5 L26 13 M26 13 V7 M26 13 H20"/><rect x="5" y="17" width="17" height="4.5"/></g></svg>
<svg style="left:822px;top:1251px" width="20" height="27"><g fill="none" stroke="#6c7074" stroke-width="1.8"><path d="M10 0 V16 M3 9.5 L10 16.5 L17 9.5"/><rect x="1" y="20.5" width="17" height="4.5"/></g></svg>
<svg style="left:885px;top:1251px" width="20" height="27"><g fill="none" stroke="#6c7074" stroke-width="1.8"><path d="M10 17 V1.5 M3 8 L10 1 L17 8"/><rect x="1" y="20.5" width="17" height="4.5"/></g></svg>
<div class="a" style="left:926px;top:1249px;width:1.5px;height:31px;background:#5b5f63"></div>
<svg style="left:946px;top:1251px" width="27" height="27"><g fill="none" stroke="#e6e7e8" stroke-width="2"><rect x="7" y="1" width="12.5" height="24.5"/><path d="M7 6 H1.5 V21 H7 M19.5 6 H25 V21 H19.5"/></g></svg>
<svg style="left:1008px;top:1249px" width="32" height="31"><g fill="none" stroke="#e6e7e8" stroke-width="2"><circle cx="7" cy="6.5" r="5"/><circle cx="7" cy="24" r="5"/><circle cx="24.5" cy="15" r="5"/><path d="M11.5 9 L20 13 M11.5 21.5 L20 17.5"/></g></svg>
<svg style="left:1073px;top:1249px" width="31" height="31"><g fill="none" stroke="#e6e7e8" stroke-width="2"><rect x="1.2" y="1.2" width="28" height="28.5" rx="4"/><rect x="7" y="6.5" width="16.5" height="6.5" rx="3.2"/><rect x="7" y="17.5" width="16.5" height="6.5" rx="3.2"/><circle cx="19.7" cy="9.7" r="1.6"/><circle cx="10.6" cy="20.7" r="1.6"/></g></svg>
<svg style="left:1136px;top:1250px" width="30" height="30"><path d="M1.5 13.5 L28 1.5 L15.5 28 L13 16 Z" fill="none" stroke="#e6e7e8" stroke-width="2" stroke-linejoin="miter"/></svg>
<div class="a" style="left:1182px;top:1249px;width:1.5px;height:31px;background:#5b5f63"></div>
<div class="a" style="left:1198px;top:1248px;width:31px;height:31px;background:#3f4346;border-radius:3px"></div>
<svg style="left:1202.5px;top:1254.5px" width="22.5" height="18" viewBox="14 22 65 51"><g fill="#1d2022"><path d="M37.5 27 C30 26 24 26 21.5 27 C17 28.5 14.7 33 15.3 37.5 C15.8 40.5 18.5 42.8 21.8 44 C19 41 18 38.5 18.6 35.5 C19.3 32.6 22 31.3 25 31.3 C29 31.3 33 32 37 32.8 Z"/><path d="M55.5 27 C63 26 69 26 71.5 27 C76 28.5 78.3 33 77.7 37.5 C77.2 40.5 74.5 42.8 71.2 44 C74 41 75 38.5 74.4 35.5 C73.7 32.6 71 31.3 68 31.3 C64 31.3 60 32 56 32.8 Z"/><path d="M46.5 23.2 L50.0 23.4 L54.0 24.8 L57.2 27.0 L57.6 31.0 L58.0 34.2 L56.3 37.5 L57.0 41.0 L55.9 45.0 L56.7 49.5 L55.3 54.0 L54.8 60.0 L54.2 66.0 L53.2 70.0 L51.2 71.3 L49.2 70.8 L48.2 66.0 L47.5 58.0 L47.0 48.0 L46.7 30.0 L46.3 30.0 L46.0 48.0 L45.5 58.0 L44.8 66.0 L43.8 70.8 L41.8 71.3 L39.8 70.0 L38.8 66.0 L38.2 60.0 L37.7 54.0 L36.3 49.5 L37.1 45.0 L36.0 41.0 L36.7 37.5 L35.0 34.2 L35.4 31.0 L35.8 27.0 L39.0 24.8 L43.0 23.4 L46.5 23.2 Z"/></g></svg>
<div class="t" style="left:1238.8px;top:1252.6px;font-size:22.5px;color:#b9bbbd;letter-spacing:0.23px;-webkit-text-stroke:0.35px;">CountX</div>
<div class="a" style="left:544px;top:1293px;width:774px;height:199px;background:#23282d"></div>
<div class="a" style="left:1318px;top:1293px;width:2px;height:199px;background:#040505"></div>
<div class="a" style="left:1320px;top:1293px;width:600px;height:199px;background:#252933"></div>
<div class="t" style="left:564.6px;top:1452.4px;font-size:23.0px;color:#f0f0f1;letter-spacing:-0.30px;-webkit-text-stroke:0.35px;">Auto</div>
<svg style="left:622px;top:1453px" width="13" height="21"><path d="M1 7 L6.5 1.5 L12 7 M1 14 L6.5 19.5 L12 14" fill="none" stroke="#a9acae" stroke-width="2"/></svg>
<div class="a" style="left:652px;top:1448px;width:1.5px;height:32px;background:#5a5e62"></div>
<svg style="left:666px;top:1451px" width="31" height="24"><g fill="none" stroke="#5f6367" stroke-width="1.8"><path d="M1 12 C8 2 23 2 30 12 C23 22 8 22 1 12 Z"/><circle cx="15.5" cy="12" r="4.3"/></g></svg>
<svg style="left:709.5px;top:1450px" width="27" height="27"><g fill="none" stroke="#5f6367" stroke-width="1.8"><circle cx="13.5" cy="13.5" r="12.3"/><path d="M13.5 11.5 V20 M13.5 6.5 V8.7"/></g></svg>
<div class="a" style="left:962px;top:1442.5px;width:346px;height:43px;background:#1d1e20;border-radius:7px;box-shadow:inset 0 0 0 1.2px #3a3e42"></div>
<svg style="left:972px;top:1451px" width="26" height="26"><circle cx="13" cy="13" r="12" fill="none" stroke="#d0d2d3" stroke-width="1.8"/><path d="M6 9.3 H20 M8.5 13.5 H17.5 M11 17.7 H15" stroke="#d0d2d3" stroke-width="2" fill="none"/></svg>
<div class="t" style="left:1006.5px;top:1452.9px;font-size:23.0px;color:#6f7377;letter-spacing:0.08px;-webkit-text-stroke:0.30px;">Filter</div>
<div class="t" style="left:1378.7px;top:1301.3px;font-size:22.5px;color:#a9abb8;letter-spacing:0.01px;font-family:Liberation Mono,monospace;font-weight:bold;">BackgroundTask: no background task</div>
<div class="t" style="left:1378.7px;top:1329.3px;font-size:22.5px;color:#a9abb8;letter-spacing:0.01px;font-family:Liberation Mono,monospace;font-weight:bold;">exists with identifier 2 (0x2), or it</div>
<div class="t" style="left:1378.7px;top:1357.2px;font-size:22.5px;color:#a9abb8;letter-spacing:0.01px;font-family:Liberation Mono,monospace;font-weight:bold;">may have already been ended. Break in</div>
<div class="t" style="left:1378.7px;top:1385.2px;font-size:22.5px;color:#a9abb8;letter-spacing:0.01px;font-family:Liberation Mono,monospace;font-weight:bold;">UIApplicationEndBackgroundTaskError()</div>
<div class="t" style="left:1378.7px;top:1413.1px;font-size:22.5px;color:#a9abb8;letter-spacing:0.01px;font-family:Liberation Mono,monospace;font-weight:bold;">to debug.</div>
<div class="t" style="left:1340.5px;top:1452.8px;font-size:23.0px;color:#f0f0f1;letter-spacing:0.23px;-webkit-text-stroke:0.35px;">All Output</div>
<svg style="left:1453.5px;top:1453px" width="13" height="21"><path d="M1 7 L6.5 1.5 L12 7 M1 14 L6.5 19.5 L12 14" fill="none" stroke="#a9acae" stroke-width="2"/></svg>
<div class="a" style="left:1554px;top:1442.5px;width:204px;height:43px;background:#1d1e20;border-radius:7px;box-shadow:inset 0 0 0 1.2px #3a3e42"></div>
<svg style="left:1564px;top:1451px" width="26" height="26"><circle cx="13" cy="13" r="12" fill="none" stroke="#d0d2d3" stroke-width="1.8"/><path d="M6 9.3 H20 M8.5 13.5 H17.5 M11 17.7 H15" stroke="#d0d2d3" stroke-width="2" fill="none"/></svg>
<div class="t" style="left:1598.5px;top:1452.9px;font-size:23.0px;color:#6f7377;letter-spacing:0.08px;-webkit-text-stroke:0.30px;">Filter</div>
<svg style="left:1790px;top:1447px" width="26" height="31"><g fill="none" stroke="#b9bbbd" stroke-width="1.8"><path d="M1 5.5 H25 M8.5 5.5 V1.5 H17.5 V5.5 M3.5 5.5 L5.5 29.5 H20.5 L22.5 5.5 M9.3 9.5 L10 25.5 M13 9.5 V25.5 M16.7 9.5 L16 25.5"/></g></svg>
<div class="a" style="left:1832px;top:1448px;width:1.5px;height:32px;background:#5a5e62"></div>
<svg style="left:1844.5px;top:1448px" width="30" height="30"><rect x="1.5" y="1.5" width="26.5" height="27" fill="none" stroke="#1d67b8" stroke-width="3"/><path d="M7.5 5 V25" stroke="#1d67b8" stroke-width="3"/></svg>
<svg style="left:1880px;top:1448px" width="30" height="30"><rect x="1.5" y="1.5" width="26.5" height="27" fill="none" stroke="#1d67b8" stroke-width="3"/><path d="M22 5 V25" stroke="#1d67b8" stroke-width="3"/></svg>
<div class="a" style="left:1917.3px;top:52px;width:1.7px;height:1434px;background:#54585c"></div>
<div class="a" style="left:6px;top:1490.3px;width:1907px;height:1.7px;background:#54585c"></div>
<div class="a" style="left:0;top:122px;width:1.7px;height:1364px;background:#54585c"></div>
</div></div>
<!-- simulator -->
<div class="a" style="left:1878px;top:232px;width:12px;height:51px;background:#2b2f32;border-radius:4px 0 0 4px;box-shadow:0 0 0 1px #1d1f21"></div>
<div class="a" style="left:1878px;top:327px;width:12px;height:85px;background:#2b2f32;border-radius:4px 0 0 4px;box-shadow:0 0 0 1px #1d1f21"></div>
<div class="a" style="left:1878px;top:425px;width:12px;height:90px;background:#2b2f32;border-radius:4px 0 0 4px;box-shadow:0 0 0 1px #1d1f21"></div>
<div class="a" style="left:2540px;top:324.5px;width:13px;height:146.5px;background:#24272a;border-radius:0 4px 4px 0"></div>
<div class="a" id="sim" style="left:1886px;top:59px;width:658px;height:1364.5px;border-radius:90px;background:#1b1b1c;box-shadow:0 0 0 1px rgba(85,92,100,.6),0 18px 40px rgba(0,0,0,.33)"></div>
<div class="a" id="scr" style="left:1913px;top:87px;width:605px;height:1310px;border-radius:60px;background:#e3e3e5;overflow:hidden">
<div class="a" style="left:-1913px;top:-87px;width:2560px;height:1600px">
<svg style="left:1913px;top:87px" width="605" height="1310" viewBox="1913 87 605 1310">
<defs>
<linearGradient id="gy" gradientUnits="userSpaceOnUse" x1="1913" y1="460" x2="1990" y2="670"><stop offset="0" stop-color="#ffb81c"/><stop offset=".5" stop-color="#ffc927"/><stop offset="1" stop-color="#ffd53a"/></linearGradient>
<linearGradient id="go" gradientUnits="userSpaceOnUse" x1="2000" y1="100" x2="2350" y2="900"><stop offset="0" stop-color="#ff7a05"/><stop offset=".5" stop-color="#ff7003"/><stop offset=".8" stop-color="#fd7005"/><stop offset="1" stop-color="#fb7a0c"/></linearGradient>
<radialGradient id="gr" gradientUnits="userSpaceOnUse" cx="2530" cy="90" r="470"><stop offset="0" stop-color="#da0400"/><stop offset=".25" stop-color="#de1000"/><stop offset=".55" stop-color="#e93a00"/><stop offset=".8" stop-color="#f04c00"/><stop offset="1" stop-color="#f65e00"/></radialGradient>
<linearGradient id="gc" gradientUnits="userSpaceOnUse" x1="2340" y1="750" x2="2130" y2="985"><stop offset="0" stop-color="#ff5e35"/><stop offset=".4" stop-color="#ff573c"/><stop offset=".72" stop-color="#ff4454"/><stop offset="1" stop-color="#ff3a62"/></linearGradient>
<linearGradient id="gcl" gradientUnits="userSpaceOnUse" x1="2030" y1="800" x2="2230" y2="800"><stop offset="0" stop-color="#ff3e62" stop-opacity=".8"/><stop offset="1" stop-color="#ff3e62" stop-opacity="0"/></linearGradient>
<linearGradient id="gp" gradientUnits="userSpaceOnUse" x1="2100" y1="1040" x2="2100" y2="1400"><stop offset="0" stop-color="#cf6bd7"/><stop offset="1" stop-color="#da68e2"/></linearGradient>
<linearGradient id="gk" gradientUnits="userSpaceOnUse" x1="2000" y1="1080" x2="1950" y2="1400"><stop offset="0" stop-color="#f74d6c"/><stop offset=".45" stop-color="#f0456b"/><stop offset="1" stop-color="#c42a68"/></linearGradient>
<linearGradient id="gm" gradientUnits="userSpaceOnUse" x1="2330" y1="1100" x2="2040" y2="1400"><stop offset="0" stop-color="#d01666"/><stop offset=".35" stop-color="#bb1268"/><stop offset=".68" stop-color="#801466"/><stop offset="1" stop-color="#380f70"/></linearGradient>
<clipPath id="cpOrchid"><path id="pOrchid" d="M2251,1037 C2200,1040 2155,1052 2118,1076 C2060,1115 1985,1185 1913,1258 V1400 H2518 V1214 C2460,1150 2420,1095 2350,1056 C2318,1040 2285,1035 2251,1037 Z"/></clipPath>
<clipPath id="cpPink"><path id="pPink" d="M1913,1151 C1960,1112 2030,1078 2098,1075 C2150,1073 2215,1098 2278,1134 C2340,1170 2440,1232 2518,1300 V1400 H1913 Z"/></clipPath>
<clipPath id="cpO"><path d="M1913,87 H2518 V881 C2480,878 2455,871 2436,863 C2405,850 2380,838 2355,822 C2330,806 2312,787 2287,773 C2260,756 2232,731 2197,721 C2162,711 2130,702 2094,696 C2070,691 2048,687 2027,681 C2022,665 2016,645 2009,624 C1995,590 1978,565 1960,536 C1948,514 1935,488 1913,458 Z"/></clipPath>
<filter id="b9" x="-30%" y="-30%" width="160%" height="160%"><feGaussianBlur stdDeviation="26"/></filter>
<filter id="b2"><feGaussianBlur stdDeviation="1"/></filter>
</defs>
<path d="M1913,380 H2120 L2050,700 C2030,690 2015,680 2001,670 C1982,657 1965,647 1949,635 C1938,627 1925,615 1913,600 Z" fill="url(#gy)"/>
<path d="M1913,87 H2518 V881 C2480,878 2455,871 2436,863 C2405,850 2380,838 2355,822 C2330,806 2312,787 2287,773 C2260,756 2232,731 2197,721 C2162,711 2130,702 2094,696 C2070,691 2048,687 2027,681 C2022,665 2016,645 2009,624 C1995,590 1978,565 1960,536 C1948,514 1935,488 1913,458 Z" fill="url(#go)"/>
<g clip-path="url(#cpO)"><path d="M1913,458 C1935,488 1948,514 1960,536 C1978,565 1995,590 2009,624 C2016,645 2022,665 2027,681 C2048,687 2070,691 2094,696 C2130,702 2162,711 2197,721 C2232,731 2260,756 2287,773 C2312,787 2330,806 2355,822 C2380,838 2405,850 2436,863 C2455,871 2480,878 2518,881" fill="none" stroke="#ffa730" stroke-width="100" stroke-opacity=".6" filter="url(#b9)"/></g>
<path d="M2110,135 C2120,145 2133,155 2145,164 C2170,182 2195,193 2220,203 C2262,220 2300,238 2336,261 C2360,278 2380,300 2394,325 C2402,338 2410,350 2417,365 C2435,400 2452,425 2471,454 C2482,471 2492,488 2500,502 L2518,535 V87 H2110 Z" fill="url(#gr)" filter="url(#b2)"/>
<path d="M2027,681 C2048,687 2070,691 2094,696 C2130,702 2162,711 2197,721 C2232,731 2260,756 2287,773 C2312,787 2330,806 2355,822 C2380,838 2405,850 2436,863 C2455,871 2480,878 2518,881 V1137 C2490,1142 2470,1142 2450,1140 C2420,1138 2400,1135 2377,1128 C2345,1118 2320,1108 2300,1088 C2282,1070 2268,1052 2251,1034 C2220,1000 2190,960 2152,930 C2125,908 2095,895 2076,876 C2058,858 2053,830 2050,800 C2047,770 2044,760 2040,746 C2036,728 2034,708 2027,681 Z" fill="url(#gc)"/>
<use href="#pOrchid" fill="url(#gp)"/>
<path d="M2027,681 C2048,687 2070,691 2094,696 C2130,702 2162,711 2197,721 C2232,731 2260,756 2287,773 C2312,787 2330,806 2355,822 C2380,838 2405,850 2436,863 C2455,871 2480,878 2518,881 V1137 C2490,1142 2470,1142 2450,1140 C2420,1138 2400,1135 2377,1128 C2345,1118 2320,1108 2300,1088 C2282,1070 2268,1052 2251,1034 C2220,1000 2190,960 2152,930 C2125,908 2095,895 2076,876 C2058,858 2053,830 2050,800 C2047,770 2044,760 2040,746 C2036,728 2034,708 2027,681 Z" fill="#de0049" clip-path="url(#cpOrchid)"/>
<use href="#pPink" fill="url(#gk)"/>
<g clip-path="url(#cpPink)"><use href="#pOrchid" fill="url(#gm)"/></g>
</svg>
<div class="a" style="left:2047.3px;top:57px;width:336.7px;height:77.6px;background:#1b1b1c;border-radius:0 0 31px 31px"></div>
<div class="a" style="left:2040.3px;top:87px;width:7px;height:7px;background:radial-gradient(circle at 0 100%,rgba(27,27,28,0) 6.6px,#1b1b1c 7.2px)"></div>
<div class="a" style="left:2384px;top:87px;width:7px;height:7px;background:radial-gradient(circle at 100% 100%,rgba(27,27,28,0) 6.6px,#1b1b1c 7.2px)"></div>
<div class="t" style="left:1965.2px;top:112.2px;font-size:22.8px;color:#fff;letter-spacing:0.67px;-webkit-text-stroke:0.85px;">5:07</div>
<div class="a" style="left:2390.0px;top:127px;width:4.6px;height:4.6px;border-radius:2.3px;background:rgba(255,255,255,.28)"></div>
<div class="a" style="left:2397.6px;top:127px;width:4.6px;height:4.6px;border-radius:2.3px;background:rgba(255,255,255,.28)"></div>
<div class="a" style="left:2405.2px;top:127px;width:4.6px;height:4.6px;border-radius:2.3px;background:rgba(255,255,255,.28)"></div>
<div class="a" style="left:2412.8px;top:127px;width:4.6px;height:4.6px;border-radius:2.3px;background:rgba(255,255,255,.28)"></div>
<svg style="left:2423.5px;top:113.5px" width="25" height="19" viewBox="0 0 44 32"><g fill="none" stroke="#fff" stroke-width="5.2"><path d="M3 12.5 C13.5 1.8 30.5 1.8 41 12.5"/><path d="M10.5 19.5 C16.8 13 27.2 13 33.5 19.5"/></g><path fill="#fff" d="M22 31.5 L15.5 24.8 C19 21.5 25 21.5 28.5 24.8 Z"/></svg>
<div class="a" style="left:2455px;top:114.4px;width:35px;height:17px;border-radius:5px;border:1.3px solid rgba(255,255,255,.55)"></div>
<div class="a" style="left:2457.6px;top:117px;width:29.8px;height:11.8px;border-radius:2.8px;background:#fff"></div>
<div class="a" style="left:2491px;top:120px;width:2px;height:6px;border-radius:0 2px 2px 0;background:rgba(255,255,255,.55)"></div>
<div class="a" style="left:1959.7px;top:201.0px;width:93.5px;height:93.5px;border-radius:21.5px;background:#fff;overflow:hidden;"><div class="t" style="left:22.5px;top:11.6px;font-size:16.2px;color:#ff3b4e;letter-spacing:0.66px;-webkit-text-stroke:0.30px;">Friday</div><div class="t" style="left:12.0px;top:23.7px;font-size:63.5px;color:#111;letter-spacing:-1.13px;-webkit-text-stroke:1.8px #fff;">25</div></div>
<div class="t" style="left:1969.5px;top:306.5px;font-size:17.6px;color:#fff;letter-spacing:0.37px;-webkit-text-stroke:0.25px;">Calendar</div>
<div class="a" style="left:2098.9px;top:201.0px;width:93.5px;height:93.5px;border-radius:21.5px;background:#fff;overflow:hidden;"><svg style="left:0;top:0;isolation:isolate" width="94" height="94" viewBox="0 0 94 94"><g transform="translate(46.4,46.7)"><rect x="-12" y="-40.5" width="24" height="40" rx="12" fill="#f9a33c" transform="rotate(0)" style="mix-blend-mode:multiply"/><rect x="-12" y="-40.5" width="24" height="40" rx="12" fill="#fbd436" transform="rotate(45)" style="mix-blend-mode:multiply"/><rect x="-12" y="-40.5" width="24" height="40" rx="12" fill="#b5d556" transform="rotate(90)" style="mix-blend-mode:multiply"/><rect x="-12" y="-40.5" width="24" height="40" rx="12" fill="#6ec296" transform="rotate(135)" style="mix-blend-mode:multiply"/><rect x="-12" y="-40.5" width="24" height="40" rx="12" fill="#5ea9e2" transform="rotate(180)" style="mix-blend-mode:multiply"/><rect x="-12" y="-40.5" width="24" height="40" rx="12" fill="#a08ad0" transform="rotate(225)" style="mix-blend-mode:multiply"/><rect x="-12" y="-40.5" width="24" height="40" rx="12" fill="#ca8abe" transform="rotate(270)" style="mix-blend-mode:multiply"/><rect x="-12" y="-40.5" width="24" height="40" rx="12" fill="#f1706b" transform="rotate(315)" style="mix-blend-mode:multiply"/><circle r="2.2" fill="#fff"/></g></svg></div>
<div class="t" style="left:2116.3px;top:306.5px;font-size:17.6px;color:#fff;letter-spacing:0.50px;-webkit-text-stroke:0.25px;">Photos</div>
<div class="a" style="left:2238.8px;top:201.0px;width:93.5px;height:93.5px;border-radius:21.5px;background:#e9e7e2;overflow:hidden;"><svg style="left:0;top:0" width="94" height="94" viewBox="0 0 94 94">
<rect width="94" height="94" fill="#e9e7e2"/>
<path d="M33 0 H94 V76 L33 36 Z" fill="#9cdc7d"/>
<circle cx="88" cy="0" r="47" fill="#ebe9e6"/><circle cx="88" cy="0" r="47" fill="none" stroke="#8fd070" stroke-width="1"/>
<circle cx="88" cy="0" r="27" fill="#9cdc7d"/><circle cx="88" cy="0" r="27" fill="none" stroke="#86c868" stroke-width="1"/>
<path d="M0 39 H14 V94 H0 Z" fill="#f8c9d5"/>
<path d="M33 58 L78 94 H33 Z" fill="#dddbd7"/>
<path d="M0 13 L94 76 V94 H82 L0 40 Z" fill="#fdd23a"/><path d="M0 13 L94 76 M0 40 L82 94" stroke="#f5b62c" stroke-width="1" fill="none"/>
<rect x="13.5" y="0" width="20" height="94" fill="#fff"/><path d="M13.5 0 V94 M33.5 0 V94" stroke="#d0cfcc" stroke-width="1"/>
<rect x="17.7" y="0" width="11" height="42" fill="#3d8ee5"/>
<circle cx="23.2" cy="55.5" r="16.6" fill="#0c79e0"/><path d="M23.2 44 L30.5 64.5 L23.2 59.5 L16 64.5 Z" fill="#fff"/>
<path d="M53 61 C58 62.5 63 61.5 70 59.5 C77 61.5 82 62.5 87 61 C88.5 74 82 83 70 88.5 C58 83 51.5 74 53 61 Z" fill="#1c7be1" stroke="#fff" stroke-width="1.6"/>
<path d="M54.5 62.5 C59 63.5 63 63 70 61 C77 63 81 63.5 85.5 62.5 C85.8 65 85.7 67 85.4 68.5 H54.6 C54.3 67 54.2 65 54.5 62.5 Z" fill="#e8232f"/><path d="M54 69 H86" stroke="#fff" stroke-width="1.2"/>
<text x="70" y="80.8" font-family="Liberation Sans" font-weight="bold" font-size="10.8" fill="#fff" text-anchor="middle">280</text>
</svg></div>
<div class="t" style="left:2263.4px;top:306.5px;font-size:17.6px;color:#fff;letter-spacing:0.19px;-webkit-text-stroke:0.25px;">Maps</div>
<div class="a" style="left:2377.8px;top:201.0px;width:93.5px;height:93.5px;border-radius:21.5px;background:#fff;overflow:hidden;"><svg style="left:0;top:0" width="94" height="94" viewBox="0 0 94 94"><circle cx="17.4" cy="23.3" r="7.2" fill="none" stroke="#1f80f5" stroke-width="1.5"/><circle cx="17.4" cy="23.3" r="4.9" fill="#1f80f5"/><rect x="34" y="22.3" width="48.3" height="2" fill="#d2d2d5"/><circle cx="17.4" cy="46.6" r="7.2" fill="none" stroke="#f23a3a" stroke-width="1.5"/><circle cx="17.4" cy="46.6" r="4.9" fill="#f23a3a"/><rect x="34" y="45.6" width="48.3" height="2" fill="#d2d2d5"/><circle cx="17.4" cy="70.0" r="7.2" fill="none" stroke="#f79a1e" stroke-width="1.5"/><circle cx="17.4" cy="70.0" r="4.9" fill="#f79a1e"/><rect x="34" y="69.0" width="48.3" height="2" fill="#d2d2d5"/></svg></div>
<div class="t" style="left:2380.0px;top:306.5px;font-size:17.6px;color:#fff;letter-spacing:0.36px;-webkit-text-stroke:0.25px;">Reminders</div>
<div class="a" style="left:1959.7px;top:364.8px;width:93.5px;height:93.5px;border-radius:21.5px;background:#fff;overflow:hidden;"><svg style="left:0;top:0" width="94" height="94" viewBox="0 0 94 94"><defs><linearGradient id="gn" x1="0" y1="0" x2="0" y2="1"><stop offset="0" stop-color="#fb5c70"/><stop offset="1" stop-color="#ff2d5c"/></linearGradient><clipPath id="cn"><rect x="19.4" y="19.3" width="54.2" height="54.7" rx="4.5"/></clipPath></defs>
<g clip-path="url(#cn)" fill="url(#gn)"><path d="M19.4 19.3 H32 L73.6 58 V74 H61 L19.4 33.5 Z"/><path d="M49 19.3 H73.6 V45 C70 33 61 24.5 49 19.3 Z"/><path d="M19.4 48 V74 H44.5 C32 69 23.5 60 19.4 48 Z"/></g></svg></div>
<div class="t" style="left:1984.0px;top:470.5px;font-size:17.6px;color:#fff;letter-spacing:0.33px;-webkit-text-stroke:0.25px;">News</div>
<div class="a" style="left:2098.9px;top:364.8px;width:93.5px;height:93.5px;border-radius:21.5px;background:#fff;overflow:hidden;"><svg style="left:0;top:0" width="94" height="94" viewBox="0 0 94 94"><defs><linearGradient id="gh" x1="0" y1="0" x2="0" y2="1"><stop offset="0" stop-color="#e75aab"/><stop offset=".15" stop-color="#ec5a9c"/><stop offset=".45" stop-color="#ff4a6b"/><stop offset=".8" stop-color="#f23c34"/><stop offset="1" stop-color="#f0392e"/></linearGradient></defs>
<path d="M56.4 54.2 C46 47.5 34.7 39.5 34.7 28.2 C34.7 21 40 15.5 46.3 15.5 C50.5 15.5 54 17.5 56.4 21.2 C58.8 17.5 62.3 15.5 66.5 15.5 C72.8 15.5 78.1 21 78.1 28.2 C78.1 39.5 66.8 47.5 56.4 54.2 Z" fill="url(#gh)"/></svg></div>
<div class="t" style="left:2118.8px;top:470.5px;font-size:17.6px;color:#fff;letter-spacing:0.46px;-webkit-text-stroke:0.25px;">Health</div>
<div class="a" style="left:2238.8px;top:364.8px;width:93.5px;height:93.5px;border-radius:21.5px;background:#1c1c1e;overflow:hidden;"><svg style="left:0;top:0" width="94" height="94" viewBox="0 0 94 94">
<rect x="10.8" y="20" width="71.2" height="53.4" rx="6" fill="#d9d9db"/>
<rect x="14.2" y="23.4" width="64.8" height="30" rx="4.5" fill="#4a9be1"/>
<rect x="14.2" y="29" width="64.8" height="30" rx="4.5" fill="#f7b603"/>
<rect x="14.2" y="34.5" width="64.8" height="30" rx="4.5" fill="#3eb94b"/>
<rect x="14.2" y="40.3" width="64.8" height="30" rx="4.5" fill="#f4716b"/>
<path d="M10.8 47 H31 C36 47 36.5 55.8 46.4 55.8 C56.3 55.8 56.8 47 61.8 47 H82 V67.4 Q82 73.4 76 73.4 H16.8 Q10.8 73.4 10.8 67.4 Z" fill="#d6d6d9"/></svg></div>
<div class="t" style="left:2260.6px;top:470.5px;font-size:17.6px;color:#fff;letter-spacing:0.45px;-webkit-text-stroke:0.25px;">Wallet</div>
<div class="a" style="left:2377.8px;top:364.8px;width:93.5px;height:93.5px;border-radius:21.5px;background:#c2c3c6;overflow:hidden;"><svg style="left:0;top:0" width="94" height="94" viewBox="0 0 94 94"><defs><linearGradient id="gs" x1="0" y1="0" x2="0" y2="1"><stop offset="0" stop-color="#ebebed"/><stop offset=".5" stop-color="#c0c1c4"/><stop offset="1" stop-color="#898b8f"/></linearGradient></defs>
<rect width="94" height="94" fill="url(#gs)"/><g transform="translate(46.6,46.6)">
<rect x="-1.15" y="-40.4" width="2.3" height="5" fill="#2e3035" transform="rotate(0)"/><rect x="-1.15" y="-40.4" width="2.3" height="5" fill="#2e3035" transform="rotate(6)"/><rect x="-1.15" y="-40.4" width="2.3" height="5" fill="#2e3035" transform="rotate(12)"/><rect x="-1.15" y="-40.4" width="2.3" height="5" fill="#2e3035" transform="rotate(18)"/><rect x="-1.15" y="-40.4" width="2.3" height="5" fill="#2e3035" transform="rotate(24)"/><rect x="-1.15" y="-40.4" width="2.3" height="5" fill="#2e3035" transform="rotate(30)"/><rect x="-1.15" y="-40.4" width="2.3" height="5" fill="#2e3035" transform="rotate(36)"/><rect x="-1.15" y="-40.4" width="2.3" height="5" fill="#2e3035" transform="rotate(42)"/><rect x="-1.15" y="-40.4" width="2.3" height="5" fill="#2e3035" transform="rotate(48)"/><rect x="-1.15" y="-40.4" width="2.3" height="5" fill="#2e3035" transform="rotate(54)"/><rect x="-1.15" y="-40.4" width="2.3" height="5" fill="#2e3035" transform="rotate(60)"/><rect x="-1.15" y="-40.4" width="2.3" height="5" fill="#2e3035" transform="rotate(66)"/><rect x="-1.15" y="-40.4" width="2.3" height="5" fill="#2e3035" transform="rotate(72)"/><rect x="-1.15" y="-40.4" width="2.3" height="5" fill="#2e3035" transform="rotate(78)"/><rect x="-1.15" y="-40.4" width="2.3" height="5" fill="#2e3035" transform="rotate(84)"/><rect x="-1.15" y="-40.4" width="2.3" height="5" fill="#2e3035" transform="rotate(90)"/><rect x="-1.15" y="-40.4" width="2.3" height="5" fill="#2e3035" transform="rotate(96)"/><rect x="-1.15" y="-40.4" width="2.3" height="5" fill="#2e3035" transform="rotate(102)"/><rect x="-1.15" y="-40.4" width="2.3" height="5" fill="#2e3035" transform="rotate(108)"/><rect x="-1.15" y="-40.4" width="2.3" height="5" fill="#2e3035" transform="rotate(114)"/><rect x="-1.15" y="-40.4" width="2.3" height="5" fill="#2e3035" transform="rotate(120)"/><rect x="-1.15" y="-40.4" width="2.3" height="5" fill="#2e3035" transform="rotate(126)"/><rect x="-1.15" y="-40.4" width="2.3" height="5" fill="#2e3035" transform="rotate(132)"/><rect x="-1.15" y="-40.4" width="2.3" height="5" fill="#2e3035" transform="rotate(138)"/><rect x="-1.15" y="-40.4" width="2.3" height="5" fill="#2e3035" transform="rotate(144)"/><rect x="-1.15" y="-40.4" width="2.3" height="5" fill="#2e3035" transform="rotate(150)"/><rect x="-1.15" y="-40.4" width="2.3" height="5" fill="#2e3035" transform="rotate(156)"/><rect x="-1.15" y="-40.4" width="2.3" height="5" fill="#2e3035" transform="rotate(162)"/><rect x="-1.15" y="-40.4" width="2.3" height="5" fill="#2e3035" transform="rotate(168)"/><rect x="-1.15" y="-40.4" width="2.3" height="5" fill="#2e3035" transform="rotate(174)"/><rect x="-1.15" y="-40.4" width="2.3" height="5" fill="#2e3035" transform="rotate(180)"/><rect x="-1.15" y="-40.4" width="2.3" height="5" fill="#2e3035" transform="rotate(186)"/><rect x="-1.15" y="-40.4" width="2.3" height="5" fill="#2e3035" transform="rotate(192)"/><rect x="-1.15" y="-40.4" width="2.3" height="5" fill="#2e3035" transform="rotate(198)"/><rect x="-1.15" y="-40.4" width="2.3" height="5" fill="#2e3035" transform="rotate(204)"/><rect x="-1.15" y="-40.4" width="2.3" height="5" fill="#2e3035" transform="rotate(210)"/><rect x="-1.15" y="-40.4" width="2.3" height="5" fill="#2e3035" transform="rotate(216)"/><rect x="-1.15" y="-40.4" width="2.3" height="5" fill="#2e3035" transform="rotate(222)"/><rect x="-1.15" y="-40.4" width="2.3" height="5" fill="#2e3035" transform="rotate(228)"/><rect x="-1.15" y="-40.4" width="2.3" height="5" fill="#2e3035" transform="rotate(234)"/><rect x="-1.15" y="-40.4" width="2.3" height="5" fill="#2e3035" transform="rotate(240)"/><rect x="-1.15" y="-40.4" width="2.3" height="5" fill="#2e3035" transform="rotate(246)"/><rect x="-1.15" y="-40.4" width="2.3" height="5" fill="#2e3035" transform="rotate(252)"/><rect x="-1.15" y="-40.4" width="2.3" height="5" fill="#2e3035" transform="rotate(258)"/><rect x="-1.15" y="-40.4" width="2.3" height="5" fill="#2e3035" transform="rotate(264)"/><rect x="-1.15" y="-40.4" width="2.3" height="5" fill="#2e3035" transform="rotate(270)"/><rect x="-1.15" y="-40.4" width="2.3" height="5" fill="#2e3035" transform="rotate(276)"/><rect x="-1.15" y="-40.4" width="2.3" height="5" fill="#2e3035" transform="rotate(282)"/><rect x="-1.15" y="-40.4" width="2.3" height="5" fill="#2e3035" transform="rotate(288)"/><rect x="-1.15" y="-40.4" width="2.3" height="5" fill="#2e3035" transform="rotate(294)"/><rect x="-1.15" y="-40.4" width="2.3" height="5" fill="#2e3035" transform="rotate(300)"/><rect x="-1.15" y="-40.4" width="2.3" height="5" fill="#2e3035" transform="rotate(306)"/><rect x="-1.15" y="-40.4" width="2.3" height="5" fill="#2e3035" transform="rotate(312)"/><rect x="-1.15" y="-40.4" width="2.3" height="5" fill="#2e3035" transform="rotate(318)"/><rect x="-1.15" y="-40.4" width="2.3" height="5" fill="#2e3035" transform="rotate(324)"/><rect x="-1.15" y="-40.4" width="2.3" height="5" fill="#2e3035" transform="rotate(330)"/><rect x="-1.15" y="-40.4" width="2.3" height="5" fill="#2e3035" transform="rotate(336)"/><rect x="-1.15" y="-40.4" width="2.3" height="5" fill="#2e3035" transform="rotate(342)"/><rect x="-1.15" y="-40.4" width="2.3" height="5" fill="#2e3035" transform="rotate(348)"/><rect x="-1.15" y="-40.4" width="2.3" height="5" fill="#2e3035" transform="rotate(354)"/><circle r="36.6" fill="#2e3035"/><circle r="33.2" fill="#a9abaf"/><circle r="30.2" fill="#2e3035"/><rect x="-0.7" y="-28.6" width="1.4" height="5.2" fill="#63656a" transform="rotate(0.00)"/><rect x="-0.7" y="-28.6" width="1.4" height="5.2" fill="#63656a" transform="rotate(6.67)"/><rect x="-0.7" y="-28.6" width="1.4" height="5.2" fill="#63656a" transform="rotate(13.33)"/><rect x="-0.7" y="-28.6" width="1.4" height="5.2" fill="#63656a" transform="rotate(20.00)"/><rect x="-0.7" y="-28.6" width="1.4" height="5.2" fill="#63656a" transform="rotate(26.67)"/><rect x="-0.7" y="-28.6" width="1.4" height="5.2" fill="#63656a" transform="rotate(33.33)"/><rect x="-0.7" y="-28.6" width="1.4" height="5.2" fill="#63656a" transform="rotate(40.00)"/><rect x="-0.7" y="-28.6" width="1.4" height="5.2" fill="#63656a" transform="rotate(46.67)"/><rect x="-0.7" y="-28.6" width="1.4" height="5.2" fill="#63656a" transform="rotate(53.33)"/><rect x="-0.7" y="-28.6" width="1.4" height="5.2" fill="#63656a" transform="rotate(60.00)"/><rect x="-0.7" y="-28.6" width="1.4" height="5.2" fill="#63656a" transform="rotate(66.67)"/><rect x="-0.7" y="-28.6" width="1.4" height="5.2" fill="#63656a" transform="rotate(73.33)"/><rect x="-0.7" y="-28.6" width="1.4" height="5.2" fill="#63656a" transform="rotate(80.00)"/><rect x="-0.7" y="-28.6" width="1.4" height="5.2" fill="#63656a" transform="rotate(86.67)"/><rect x="-0.7" y="-28.6" width="1.4" height="5.2" fill="#63656a" transform="rotate(93.33)"/><rect x="-0.7" y="-28.6" width="1.4" height="5.2" fill="#63656a" transform="rotate(100.00)"/><rect x="-0.7" y="-28.6" width="1.4" height="5.2" fill="#63656a" transform="rotate(106.67)"/><rect x="-0.7" y="-28.6" width="1.4" height="5.2" fill="#63656a" transform="rotate(113.33)"/><rect x="-0.7" y="-28.6" width="1.4" height="5.2" fill="#63656a" transform="rotate(120.00)"/><rect x="-0.7" y="-28.6" width="1.4" height="5.2" fill="#63656a" transform="rotate(126.67)"/><rect x="-0.7" y="-28.6" width="1.4" height="5.2" fill="#63656a" transform="rotate(133.33)"/><rect x="-0.7" y="-28.6" width="1.4" height="5.2" fill="#63656a" transform="rotate(140.00)"/><rect x="-0.7" y="-28.6" width="1.4" height="5.2" fill="#63656a" transform="rotate(146.67)"/><rect x="-0.7" y="-28.6" width="1.4" height="5.2" fill="#63656a" transform="rotate(153.33)"/><rect x="-0.7" y="-28.6" width="1.4" height="5.2" fill="#63656a" transform="rotate(160.00)"/><rect x="-0.7" y="-28.6" width="1.4" height="5.2" fill="#63656a" transform="rotate(166.67)"/><rect x="-0.7" y="-28.6" width="1.4" height="5.2" fill="#63656a" transform="rotate(173.33)"/><rect x="-0.7" y="-28.6" width="1.4" height="5.2" fill="#63656a" transform="rotate(180.00)"/><rect x="-0.7" y="-28.6" width="1.4" height="5.2" fill="#63656a" transform="rotate(186.67)"/><rect x="-0.7" y="-28.6" width="1.4" height="5.2" fill="#63656a" transform="rotate(193.33)"/><rect x="-0.7" y="-28.6" width="1.4" height="5.2" fill="#63656a" transform="rotate(200.00)"/><rect x="-0.7" y="-28.6" width="1.4" height="5.2" fill="#63656a" transform="rotate(206.67)"/><rect x="-0.7" y="-28.6" width="1.4" height="5.2" fill="#63656a" transform="rotate(213.33)"/><rect x="-0.7" y="-28.6" width="1.4" height="5.2" fill="#63656a" transform="rotate(220.00)"/><rect x="-0.7" y="-28.6" width="1.4" height="5.2" fill="#63656a" transform="rotate(226.67)"/><rect x="-0.7" y="-28.6" width="1.4" height="5.2" fill="#63656a" transform="rotate(233.33)"/><rect x="-0.7" y="-28.6" width="1.4" height="5.2" fill="#63656a" transform="rotate(240.00)"/><rect x="-0.7" y="-28.6" width="1.4" height="5.2" fill="#63656a" transform="rotate(246.67)"/><rect x="-0.7" y="-28.6" width="1.4" height="5.2" fill="#63656a" transform="rotate(253.33)"/><rect x="-0.7" y="-28.6" width="1.4" height="5.2" fill="#63656a" transform="rotate(260.00)"/><rect x="-0.7" y="-28.6" width="1.4" height="5.2" fill="#63656a" transform="rotate(266.67)"/><rect x="-0.7" y="-28.6" width="1.4" height="5.2" fill="#63656a" transform="rotate(273.33)"/><rect x="-0.7" y="-28.6" width="1.4" height="5.2" fill="#63656a" transform="rotate(280.00)"/><rect x="-0.7" y="-28.6" width="1.4" height="5.2" fill="#63656a" transform="rotate(286.67)"/><rect x="-0.7" y="-28.6" width="1.4" height="5.2" fill="#63656a" transform="rotate(293.33)"/><rect x="-0.7" y="-28.6" width="1.4" height="5.2" fill="#63656a" transform="rotate(300.00)"/><rect x="-0.7" y="-28.6" width="1.4" height="5.2" fill="#63656a" transform="rotate(306.67)"/><rect x="-0.7" y="-28.6" width="1.4" height="5.2" fill="#63656a" transform="rotate(313.33)"/><rect x="-0.7" y="-28.6" width="1.4" height="5.2" fill="#63656a" transform="rotate(320.00)"/><rect x="-0.7" y="-28.6" width="1.4" height="5.2" fill="#63656a" transform="rotate(326.67)"/><rect x="-0.7" y="-28.6" width="1.4" height="5.2" fill="#63656a" transform="rotate(333.33)"/><rect x="-0.7" y="-28.6" width="1.4" height="5.2" fill="#63656a" transform="rotate(340.00)"/><rect x="-0.7" y="-28.6" width="1.4" height="5.2" fill="#63656a" transform="rotate(346.67)"/><rect x="-0.7" y="-28.6" width="1.4" height="5.2" fill="#63656a" transform="rotate(353.33)"/><circle r="22.8" fill="#a4a6aa"/><circle r="20.6" fill="#c3c4c7"/><circle r="17.6" fill="#2f3136"/>
<g stroke="#b1b3b6" stroke-width="3"><path d="M0 0 L21 0"/><path d="M0 0 L-10.5 -18.2"/><path d="M0 0 L-10.5 18.2"/></g><circle r="2.2" fill="#2e3035"/></g></svg></div>
<div class="t" style="left:2389.8px;top:470.5px;font-size:17.6px;color:#fff;letter-spacing:0.63px;-webkit-text-stroke:0.25px;">Settings</div>
<div class="a" style="left:1959.7px;top:529.2px;width:93.5px;height:93.5px;border-radius:21.5px;background:#434547;overflow:hidden;"><svg style="left:0;top:0" width="94" height="94" viewBox="0 0 94 94"><g fill="#050505">
<path d="M37.5 27 C30 26 24 26 21.5 27 C17 28.5 14.7 33 15.3 37.5 C15.8 40.5 18.5 42.8 21.8 44 C19 41 18 38.5 18.6 35.5 C19.3 32.6 22 31.3 25 31.3 C29 31.3 33 32 37 32.8 Z"/>
<path d="M55.5 27 C63 26 69 26 71.5 27 C76 28.5 78.3 33 77.7 37.5 C77.2 40.5 74.5 42.8 71.2 44 C74 41 75 38.5 74.4 35.5 C73.7 32.6 71 31.3 68 31.3 C64 31.3 60 32 56 32.8 Z"/>
<path d="M46.5 23.2 L50.0 23.4 L54.0 24.8 L57.2 27.0 L57.6 31.0 L58.0 34.2 L56.3 37.5 L57.0 41.0 L55.9 45.0 L56.7 49.5 L55.3 54.0 L54.8 60.0 L54.2 66.0 L53.2 70.0 L51.2 71.3 L49.2 70.8 L48.2 66.0 L47.5 58.0 L47.0 48.0 L46.7 30.0 L46.3 30.0 L46.0 48.0 L45.5 58.0 L44.8 66.0 L43.8 70.8 L41.8 71.3 L39.8 70.0 L38.8 66.0 L38.2 60.0 L37.7 54.0 L36.3 49.5 L37.1 45.0 L36.0 41.0 L36.7 37.5 L35.0 34.2 L35.4 31.0 L35.8 27.0 L39.0 24.8 L43.0 23.4 L46.5 23.2 Z" stroke="#050505" stroke-width="0.8" stroke-linejoin="round"/></g></svg></div>
<div class="t" style="left:1975.5px;top:634.7px;font-size:17.6px;color:#fff;letter-spacing:0.36px;-webkit-text-stroke:0.25px;">CountX</div>
<div class="a" style="left:2186.6px;top:1208.4px;width:10.4px;height:10.4px;border-radius:5.2px;background:rgba(255,255,255,.42)"></div>
<div class="a" style="left:2210.2px;top:1208.4px;width:10.4px;height:10.4px;border-radius:5.2px;background:#fff"></div>
<div class="a" style="left:2233.4px;top:1208.4px;width:10.4px;height:10.4px;border-radius:5.2px;background:rgba(255,255,255,.42)"></div>
<div class="a" style="left:1930.7px;top:1229.8px;width:569.5px;height:149.2px;border-radius:44px;background:linear-gradient(100deg,#86499d 0%,#9a4b98 25%,#b04c93 50%,#cf4e97 75%,#e9519c 100%)"></div>
<div class="a" style="left:2051.6px;top:1258.0px;width:93.5px;height:93.5px;border-radius:21.5px;background:#fff;overflow:hidden;"><svg style="left:0;top:0" width="94" height="94" viewBox="0 0 94 94"><defs><linearGradient id="gsf" x1="0" y1="0" x2="0" y2="1"><stop offset="0" stop-color="#1ebafb"/><stop offset="1" stop-color="#1f78f0"/></linearGradient></defs>
<g transform="translate(46.4,46.6)"><circle r="40.4" fill="url(#gsf)"/><rect x="-0.55" y="-37.6" width="1.1" height="5.2" fill="#fff" opacity=".85" transform="rotate(0)"/><rect x="-0.55" y="-37.6" width="1.1" height="3.2" fill="#fff" opacity=".85" transform="rotate(5)"/><rect x="-0.55" y="-37.6" width="1.1" height="5.2" fill="#fff" opacity=".85" transform="rotate(10)"/><rect x="-0.55" y="-37.6" width="1.1" height="3.2" fill="#fff" opacity=".85" transform="rotate(15)"/><rect x="-0.55" y="-37.6" width="1.1" height="5.2" fill="#fff" opacity=".85" transform="rotate(20)"/><rect x="-0.55" y="-37.6" width="1.1" height="3.2" fill="#fff" opacity=".85" transform="rotate(25)"/><rect x="-0.55" y="-37.6" width="1.1" height="5.2" fill="#fff" opacity=".85" transform="rotate(30)"/><rect x="-0.55" y="-37.6" width="1.1" height="3.2" fill="#fff" opacity=".85" transform="rotate(35)"/><rect x="-0.55" y="-37.6" width="1.1" height="5.2" fill="#fff" opacity=".85" transform="rotate(40)"/><rect x="-0.55" y="-37.6" width="1.1" height="3.2" fill="#fff" opacity=".85" transform="rotate(45)"/><rect x="-0.55" y="-37.6" width="1.1" height="5.2" fill="#fff" opacity=".85" transform="rotate(50)"/><rect x="-0.55" y="-37.6" width="1.1" height="3.2" fill="#fff" opacity=".85" transform="rotate(55)"/><rect x="-0.55" y="-37.6" width="1.1" height="5.2" fill="#fff" opacity=".85" transform="rotate(60)"/><rect x="-0.55" y="-37.6" width="1.1" height="3.2" fill="#fff" opacity=".85" transform="rotate(65)"/><rect x="-0.55" y="-37.6" width="1.1" height="5.2" fill="#fff" opacity=".85" transform="rotate(70)"/><rect x="-0.55" y="-37.6" width="1.1" height="3.2" fill="#fff" opacity=".85" transform="rotate(75)"/><rect x="-0.55" y="-37.6" width="1.1" height="5.2" fill="#fff" opacity=".85" transform="rotate(80)"/><rect x="-0.55" y="-37.6" width="1.1" height="3.2" fill="#fff" opacity=".85" transform="rotate(85)"/><rect x="-0.55" y="-37.6" width="1.1" height="5.2" fill="#fff" opacity=".85" transform="rotate(90)"/><rect x="-0.55" y="-37.6" width="1.1" height="3.2" fill="#fff" opacity=".85" transform="rotate(95)"/><rect x="-0.55" y="-37.6" width="1.1" height="5.2" fill="#fff" opacity=".85" transform="rotate(100)"/><rect x="-0.55" y="-37.6" width="1.1" height="3.2" fill="#fff" opacity=".85" transform="rotate(105)"/><rect x="-0.55" y="-37.6" width="1.1" height="5.2" fill="#fff" opacity=".85" transform="rotate(110)"/><rect x="-0.55" y="-37.6" width="1.1" height="3.2" fill="#fff" opacity=".85" transform="rotate(115)"/><rect x="-0.55" y="-37.6" width="1.1" height="5.2" fill="#fff" opacity=".85" transform="rotate(120)"/><rect x="-0.55" y="-37.6" width="1.1" height="3.2" fill="#fff" opacity=".85" transform="rotate(125)"/><rect x="-0.55" y="-37.6" width="1.1" height="5.2" fill="#fff" opacity=".85" transform="rotate(130)"/><rect x="-0.55" y="-37.6" width="1.1" height="3.2" fill="#fff" opacity=".85" transform="rotate(135)"/><rect x="-0.55" y="-37.6" width="1.1" height="5.2" fill="#fff" opacity=".85" transform="rotate(140)"/><rect x="-0.55" y="-37.6" width="1.1" height="3.2" fill="#fff" opacity=".85" transform="rotate(145)"/><rect x="-0.55" y="-37.6" width="1.1" height="5.2" fill="#fff" opacity=".85" transform="rotate(150)"/><rect x="-0.55" y="-37.6" width="1.1" height="3.2" fill="#fff" opacity=".85" transform="rotate(155)"/><rect x="-0.55" y="-37.6" width="1.1" height="5.2" fill="#fff" opacity=".85" transform="rotate(160)"/><rect x="-0.55" y="-37.6" width="1.1" height="3.2" fill="#fff" opacity=".85" transform="rotate(165)"/><rect x="-0.55" y="-37.6" width="1.1" height="5.2" fill="#fff" opacity=".85" transform="rotate(170)"/><rect x="-0.55" y="-37.6" width="1.1" height="3.2" fill="#fff" opacity=".85" transform="rotate(175)"/><rect x="-0.55" y="-37.6" width="1.1" height="5.2" fill="#fff" opacity=".85" transform="rotate(180)"/><rect x="-0.55" y="-37.6" width="1.1" height="3.2" fill="#fff" opacity=".85" transform="rotate(185)"/><rect x="-0.55" y="-37.6" width="1.1" height="5.2" fill="#fff" opacity=".85" transform="rotate(190)"/><rect x="-0.55" y="-37.6" width="1.1" height="3.2" fill="#fff" opacity=".85" transform="rotate(195)"/><rect x="-0.55" y="-37.6" width="1.1" height="5.2" fill="#fff" opacity=".85" transform="rotate(200)"/><rect x="-0.55" y="-37.6" width="1.1" height="3.2" fill="#fff" opacity=".85" transform="rotate(205)"/><rect x="-0.55" y="-37.6" width="1.1" height="5.2" fill="#fff" opacity=".85" transform="rotate(210)"/><rect x="-0.55" y="-37.6" width="1.1" height="3.2" fill="#fff" opacity=".85" transform="rotate(215)"/><rect x="-0.55" y="-37.6" width="1.1" height="5.2" fill="#fff" opacity=".85" transform="rotate(220)"/><rect x="-0.55" y="-37.6" width="1.1" height="3.2" fill="#fff" opacity=".85" transform="rotate(225)"/><rect x="-0.55" y="-37.6" width="1.1" height="5.2" fill="#fff" opacity=".85" transform="rotate(230)"/><rect x="-0.55" y="-37.6" width="1.1" height="3.2" fill="#fff" opacity=".85" transform="rotate(235)"/><rect x="-0.55" y="-37.6" width="1.1" height="5.2" fill="#fff" opacity=".85" transform="rotate(240)"/><rect x="-0.55" y="-37.6" width="1.1" height="3.2" fill="#fff" opacity=".85" transform="rotate(245)"/><rect x="-0.55" y="-37.6" width="1.1" height="5.2" fill="#fff" opacity=".85" transform="rotate(250)"/><rect x="-0.55" y="-37.6" width="1.1" height="3.2" fill="#fff" opacity=".85" transform="rotate(255)"/><rect x="-0.55" y="-37.6" width="1.1" height="5.2" fill="#fff" opacity=".85" transform="rotate(260)"/><rect x="-0.55" y="-37.6" width="1.1" height="3.2" fill="#fff" opacity=".85" transform="rotate(265)"/><rect x="-0.55" y="-37.6" width="1.1" height="5.2" fill="#fff" opacity=".85" transform="rotate(270)"/><rect x="-0.55" y="-37.6" width="1.1" height="3.2" fill="#fff" opacity=".85" transform="rotate(275)"/><rect x="-0.55" y="-37.6" width="1.1" height="5.2" fill="#fff" opacity=".85" transform="rotate(280)"/><rect x="-0.55" y="-37.6" width="1.1" height="3.2" fill="#fff" opacity=".85" transform="rotate(285)"/><rect x="-0.55" y="-37.6" width="1.1" height="5.2" fill="#fff" opacity=".85" transform="rotate(290)"/><rect x="-0.55" y="-37.6" width="1.1" height="3.2" fill="#fff" opacity=".85" transform="rotate(295)"/><rect x="-0.55" y="-37.6" width="1.1" height="5.2" fill="#fff" opacity=".85" transform="rotate(300)"/><rect x="-0.55" y="-37.6" width="1.1" height="3.2" fill="#fff" opacity=".85" transform="rotate(305)"/><rect x="-0.55" y="-37.6" width="1.1" height="5.2" fill="#fff" opacity=".85" transform="rotate(310)"/><rect x="-0.55" y="-37.6" width="1.1" height="3.2" fill="#fff" opacity=".85" transform="rotate(315)"/><rect x="-0.55" y="-37.6" width="1.1" height="5.2" fill="#fff" opacity=".85" transform="rotate(320)"/><rect x="-0.55" y="-37.6" width="1.1" height="3.2" fill="#fff" opacity=".85" transform="rotate(325)"/><rect x="-0.55" y="-37.6" width="1.1" height="5.2" fill="#fff" opacity=".85" transform="rotate(330)"/><rect x="-0.55" y="-37.6" width="1.1" height="3.2" fill="#fff" opacity=".85" transform="rotate(335)"/><rect x="-0.55" y="-37.6" width="1.1" height="5.2" fill="#fff" opacity=".85" transform="rotate(340)"/><rect x="-0.55" y="-37.6" width="1.1" height="3.2" fill="#fff" opacity=".85" transform="rotate(345)"/><rect x="-0.55" y="-37.6" width="1.1" height="5.2" fill="#fff" opacity=".85" transform="rotate(350)"/><rect x="-0.55" y="-37.6" width="1.1" height="3.2" fill="#fff" opacity=".85" transform="rotate(355)"/><path d="M28.6 -23.4 L-3.2 -3.4 L3.4 3.2 Z" fill="#f5352e"/><path d="M-28.5 23.8 L-3.2 -3.4 L3.4 3.2 Z" fill="#fff"/></g></svg></div>
<div class="a" style="left:2285.8px;top:1258.0px;width:93.5px;height:93.5px;border-radius:21.5px;background:linear-gradient(180deg,#5ff777 0%,#4be866 35%,#22cf40 75%,#17c534 100%);overflow:hidden;"><svg style="left:0;top:0" width="94" height="94" viewBox="0 0 94 94"><ellipse cx="46.3" cy="44.6" rx="34" ry="28.5" fill="#fff"/><path d="M30 66 C30 71 27.5 75 24 77.6 C30 77.4 35.5 75.3 39.5 72 Z" fill="#fff"/></svg></div>
</div></div>
<!-- desktop overlay items -->
<svg style="left:2377px;top:1430px" width="119" height="93" viewBox="0 0 119 93"><defs><linearGradient id="fg" x1="0" y1="0" x2="0" y2="1"><stop offset="0" stop-color="#3a7da3"/><stop offset=".5" stop-color="#5199be"/><stop offset="1" stop-color="#5ba5c9"/></linearGradient></defs>
<path d="M0 4 Q0 0 4 0 H40 Q44 0 46.5 3.5 L49.5 8 H115 Q119 8 119 12 V89 Q119 93 115 93 H4 Q0 93 0 89 Z" fill="#2e6688"/>
<path d="M0 17 Q0 14 3 14 H116 Q119 14 119 17 V89 Q119 93 115 93 H4 Q0 93 0 89 Z" fill="url(#fg)"/>
<path d="M0 84.5 H119 V86 H0 Z" fill="#3f8ab2" opacity=".7"/></svg>
<svg style="left:2371px;top:1514px" width="20" height="24" viewBox="0 0 20 24"><path d="M4 1.5 H18 V15.5 L13.5 11.5 C9 14 5.5 18 3.5 22 C3.5 15 6 9.5 9.5 7 Z" fill="#1a1a1a" stroke="#fff" stroke-width="1.6" stroke-linejoin="round"/></svg>
<div class="t" style="left:2338.7px;top:1557.9px;font-size:24.6px;color:#fff;letter-spacing:0.31px;font-weight:bold;text-shadow:0 1.5px 3px rgba(0,0,0,.55),0 0 6px rgba(0,0,0,.25);">Relocated Items</div>
<div class="a" style="left:2088px;top:1445.8px;width:254px;height:56.2px;border-radius:9px;background:#1a1a1b;box-shadow:0 0 0 1px rgba(120,135,150,.5)"></div>
<div class="t" style="left:2114.0px;top:1460.7px;font-size:26.0px;color:#d4d4d5;letter-spacing:-0.35px;-webkit-text-stroke:0.35px;">iPhone 11 — 13.1</div>
</div></body></html>
